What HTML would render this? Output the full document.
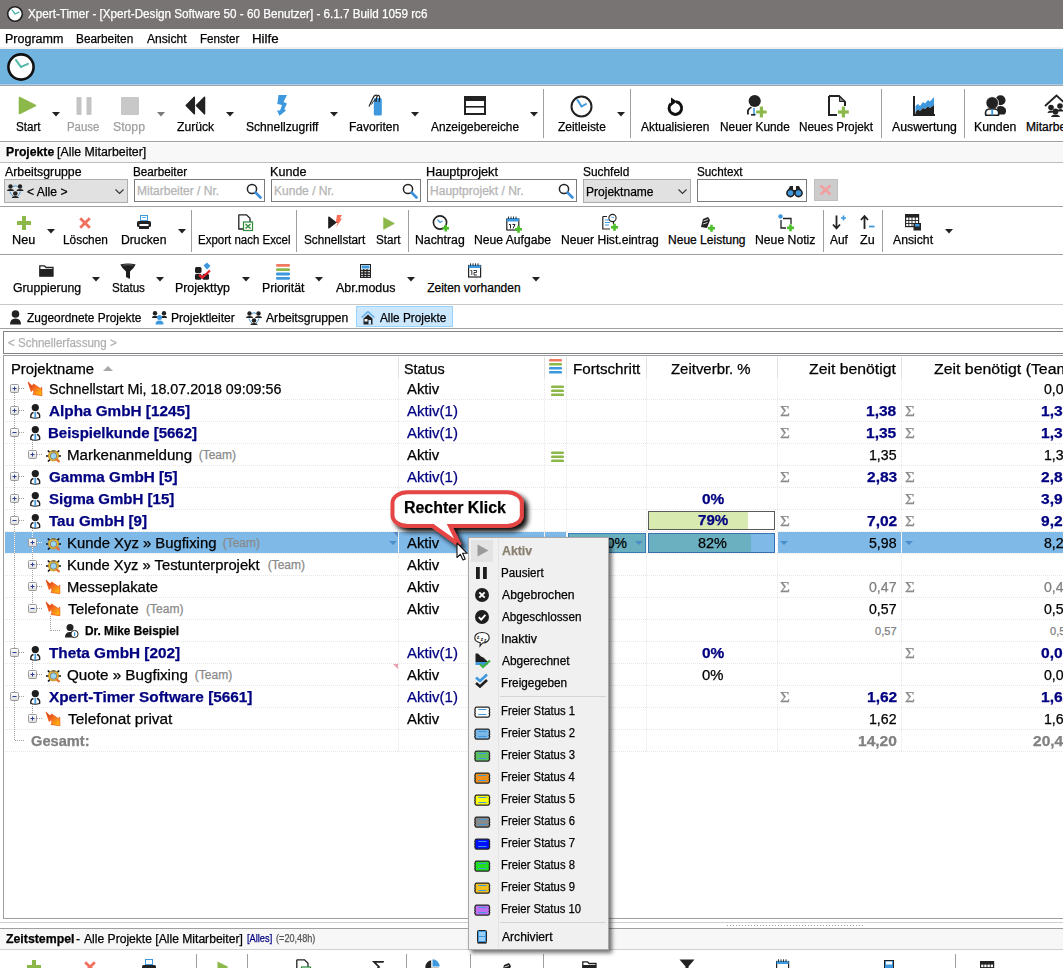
<!DOCTYPE html>
<html><head><meta charset="utf-8"><style>
html,body{margin:0;padding:0;}
body{width:1063px;height:968px;overflow:hidden;position:relative;background:#fff;font-family:"Liberation Sans",sans-serif;}
.t{position:absolute;white-space:pre;line-height:1;-webkit-text-stroke:0.25px currentColor;}
svg{overflow:visible}
</style></head><body>
<div style="position:absolute;left:0px;top:0px;width:1063px;height:29px;background:#797474"></div>
<svg style="position:absolute;left:6px;top:5px" width="18" height="18" viewBox="0 0 18 18"><circle cx="9" cy="9" r="7.3" fill="#fff" stroke="#222" stroke-width="1.6"/><path d="M6.08 4.984999999999999L9 9L13.015 7.175" fill="none" stroke="#45b5a8" stroke-width="1.2800000000000002" stroke-linecap="round"/></svg>
<div class="t" style="left:28.01px;top:7.84px;font-size:12px;color:#fff;transform:scaleX(0.9732);transform-origin:0 0;">Xpert-Timer - [Xpert-Design Software 50 - 60 Benutzer] - 6.1.7 Build 1059 rc6</div>
<div style="position:absolute;left:0px;top:29px;width:1063px;height:18px;background:#fff"></div>
<div style="position:absolute;left:0px;top:47px;width:1063px;height:2px;background:#f0f0f0"></div>
<div class="t" style="left:5.06px;top:32.84px;font-size:12px;color:#000;transform:scaleX(1.0423);transform-origin:0 0;">Programm</div>
<div class="t" style="left:76.31px;top:32.84px;font-size:12px;color:#000;transform:scaleX(0.9858);transform-origin:0 0;">Bearbeiten</div>
<div class="t" style="left:147.30px;top:32.84px;font-size:12px;color:#000;transform:scaleX(1.0076);transform-origin:0 0;">Ansicht</div>
<div class="t" style="left:200.13px;top:32.84px;font-size:12px;color:#000;transform:scaleX(0.9646);transform-origin:0 0;">Fenster</div>
<div class="t" style="left:252.10px;top:32.84px;font-size:12px;color:#000;transform:scaleX(1.1106);transform-origin:0 0;">Hilfe</div>
<div style="position:absolute;left:0px;top:49px;width:1063px;height:36px;background:#71b4e0"></div>
<svg style="position:absolute;left:6px;top:52px" width="30" height="30" viewBox="0 0 30 30"><circle cx="15" cy="15" r="12.6" fill="#fff" stroke="#111" stroke-width="2.6"/><path d="M9.96 8.07L15 15L21.93 11.85" fill="none" stroke="#55b8a8" stroke-width="2.08" stroke-linecap="round"/></svg>
<div style="position:absolute;left:0px;top:84px;width:1063px;height:1px;background:#a6cdee"></div>
<div style="position:absolute;left:0px;top:85px;width:1063px;height:1px;background:#a6a6a6"></div>
<div style="position:absolute;left:0px;top:86px;width:1063px;height:55px;background:#fff"></div>
<div style="position:absolute;left:0px;top:141px;width:1063px;height:1px;background:#a0a0a0"></div>
<div class="t" style="left:15.82px;top:120.84px;font-size:12px;color:#000;transform:scaleX(0.9677);transform-origin:0 0;">Start</div>
<div class="t" style="left:67.15px;top:120.84px;font-size:12px;color:#a0a0a0;transform:scaleX(0.9480);transform-origin:0 0;">Pause</div>
<div class="t" style="left:113.49px;top:120.84px;font-size:12px;color:#a0a0a0;transform:scaleX(1.0197);transform-origin:0 0;">Stopp</div>
<div class="t" style="left:176.70px;top:120.84px;font-size:12px;color:#000;transform:scaleX(1.0137);transform-origin:0 0;">Zurück</div>
<div class="t" style="left:245.50px;top:120.84px;font-size:12px;color:#000;transform:scaleX(1.0084);transform-origin:0 0;">Schnellzugriff</div>
<div class="t" style="left:349.10px;top:120.84px;font-size:12px;color:#000;transform:scaleX(1.0041);transform-origin:0 0;">Favoriten</div>
<div class="t" style="left:431.00px;top:120.84px;font-size:12px;color:#000;transform:scaleX(0.9843);transform-origin:0 0;">Anzeigebereiche</div>
<div class="t" style="left:557.70px;top:120.84px;font-size:12px;color:#000;transform:scaleX(0.9958);transform-origin:0 0;">Zeitleiste</div>
<div class="t" style="left:641.00px;top:120.84px;font-size:12px;color:#000;transform:scaleX(0.9956);transform-origin:0 0;">Aktualisieren</div>
<div class="t" style="left:719.71px;top:120.84px;font-size:12px;color:#000;transform:scaleX(0.9870);transform-origin:0 0;">Neuer Kunde</div>
<div class="t" style="left:799.12px;top:120.84px;font-size:12px;color:#000;transform:scaleX(0.9812);transform-origin:0 0;">Neues Projekt</div>
<div class="t" style="left:892.00px;top:120.84px;font-size:12px;color:#000;transform:scaleX(1.0224);transform-origin:0 0;">Auswertung</div>
<div class="t" style="left:974.08px;top:120.84px;font-size:12px;color:#000;transform:scaleX(1.0227);transform-origin:0 0;">Kunden</div>
<div class="t" style="left:1026.10px;top:120.84px;font-size:12px;color:#000;">Mitarbeiter</div>
<svg style="position:absolute;left:52px;top:112px" width="8" height="5" viewBox="0 0 8 5"><path d="M0 0H8L4 4.5Z" fill="#222"/></svg>
<svg style="position:absolute;left:226px;top:112px" width="8" height="5" viewBox="0 0 8 5"><path d="M0 0H8L4 4.5Z" fill="#222"/></svg>
<svg style="position:absolute;left:330px;top:112px" width="8" height="5" viewBox="0 0 8 5"><path d="M0 0H8L4 4.5Z" fill="#222"/></svg>
<svg style="position:absolute;left:411px;top:112px" width="8" height="5" viewBox="0 0 8 5"><path d="M0 0H8L4 4.5Z" fill="#222"/></svg>
<svg style="position:absolute;left:530px;top:112px" width="8" height="5" viewBox="0 0 8 5"><path d="M0 0H8L4 4.5Z" fill="#222"/></svg>
<svg style="position:absolute;left:617px;top:112px" width="8" height="5" viewBox="0 0 8 5"><path d="M0 0H8L4 4.5Z" fill="#222"/></svg>
<svg style="position:absolute;left:157px;top:112px" width="8" height="5" viewBox="0 0 8 5"><path d="M0 0H8L4 4.5Z" fill="#7a7a7a"/></svg>
<div style="position:absolute;left:543px;top:89px;width:1px;height:49px;background:#a0a0a0"></div>
<div style="position:absolute;left:630px;top:89px;width:1px;height:49px;background:#a0a0a0"></div>
<div style="position:absolute;left:881px;top:89px;width:1px;height:49px;background:#a0a0a0"></div>
<div style="position:absolute;left:964px;top:89px;width:1px;height:49px;background:#a0a0a0"></div>
<svg style="position:absolute;left:18px;top:96px" width="19" height="19" viewBox="0 0 19 19"><path d="M1.5 1.5L17.5 9.5L1.5 17.5Z" fill="#8cb84a" stroke="#8cb84a" stroke-width="1.6" stroke-linejoin="round"/></svg>
<svg style="position:absolute;left:76px;top:97px" width="16" height="18" viewBox="0 0 16 18"><rect x="0.5" y="0" width="5" height="18" rx="1" fill="#c4c4c4"/><rect x="10.5" y="0" width="5" height="18" rx="1" fill="#c4c4c4"/></svg>
<svg style="position:absolute;left:121px;top:97px" width="18" height="18" viewBox="0 0 18 18"><rect x="0" y="0" width="18" height="18" rx="1" fill="#c8c8c8"/></svg>
<svg style="position:absolute;left:185px;top:96px" width="21" height="19" viewBox="0 0 21 19"><path d="M9.3 1.2L1.2 9.5L9.3 17.8Z" fill="#222" stroke="#222" stroke-width="1.5" stroke-linejoin="round"/><path d="M19.5 1.2L11.4 9.5L19.5 17.8Z" fill="#222" stroke="#222" stroke-width="1.5" stroke-linejoin="round"/></svg>
<svg style="position:absolute;left:270px;top:90px" width="20" height="30" viewBox="0 0 20 30"><path d="M8.5 5H17L13.5 12L17 13.5L14.3 19.3L16 20.5L9.5 25.8L7 20.5L10 20.5L12 15L7.3 14Z" fill="#3d98de"/></svg>
<svg style="position:absolute;left:360px;top:90px" width="24" height="30" viewBox="0 0 24 30"><rect x="13.8" y="8" width="8" height="17.4" rx="1.5" fill="#3d98de"/><path d="M16 12Q16.5 5 18.5 5.3Q20.5 5.8 19 12" fill="none" stroke="#222" stroke-width="1.2"/><path d="M17.5 5.5Q15 4 13 8Q11 12 9 16.5" fill="none" stroke="#222" stroke-width="1.2"/><path d="M16.2 10Q14 9 11.5 14.5" fill="none" stroke="#222" stroke-width="1"/></svg>
<svg style="position:absolute;left:464px;top:96px" width="22" height="19" viewBox="0 0 22 19"><rect x="1" y="1" width="20" height="17" fill="none" stroke="#222" stroke-width="2"/><rect x="1" y="1" width="20" height="4" fill="#222"/><rect x="1" y="10" width="20" height="1.6" fill="#222"/></svg>
<svg style="position:absolute;left:570px;top:95px" width="24" height="23" viewBox="0 0 24 23"><circle cx="11.5" cy="11.5" r="10" fill="#fff" stroke="#222" stroke-width="2"/><path d="M7.5 5L11.5 11.5L16 9" fill="none" stroke="#3d98de" stroke-width="2" stroke-linecap="round"/></svg>
<svg style="position:absolute;left:666px;top:97px" width="18" height="19" viewBox="0 0 18 19"><path d="M5 6.5A6.3 6.3 0 1 0 10 4.8" fill="none" stroke="#111" stroke-width="3"/><path d="M5 0.5L11 4.5L5 9Z" fill="#111"/></svg>
<svg style="position:absolute;left:745px;top:93px" width="24" height="25" viewBox="0 0 24 25"><circle cx="9.7" cy="8" r="6.1" fill="#222"/><path d="M3.2 21.5Q1.5 16.5 6.5 14.3" fill="none" stroke="#222" stroke-width="1.8"/><path d="M9 15V21.5H11" fill="none" stroke="#3d98de" stroke-width="1.6"/><path d="M6 21.8H10" stroke="#222" stroke-width="1.6"/><rect x="11" y="17.4" width="10.8" height="3.2" fill="#8cb84a" stroke="#fff" stroke-width="0.6"/><rect x="14.8" y="13.6" width="3.2" height="10.8" fill="#8cb84a"/><rect x="11.3" y="17.7" width="10.2" height="2.6" fill="#8cb84a"/></svg>
<svg style="position:absolute;left:826px;top:93px" width="24" height="25" viewBox="0 0 24 25"><path d="M3 3H13L19 9V13M11 22H3V3" fill="none" stroke="#222" stroke-width="2"/><path d="M13.5 4V8.5H18" fill="#888" stroke="#222" stroke-width="1"/><rect x="12" y="17.4" width="10.8" height="3.2" fill="#8cb84a"/><rect x="15.8" y="13.6" width="3.2" height="10.8" fill="#8cb84a"/></svg>
<svg style="position:absolute;left:913px;top:96px" width="23" height="20" viewBox="0 0 23 20"><path d="M1 0V19H22" fill="none" stroke="#222" stroke-width="2"/><path d="M2.5 10L5 8L7 10L10 6L12 7.5L15 4L17 5.5L21 1V9L17 12L15 10.5L12 13L10 12L7 15L5 13.5L2.5 16Z" fill="#3d98de"/><path d="M2.5 16L5 13.5L7 15L10 12L12 13L15 10.5L17 12L21 9V18H2.5Z" fill="#222"/></svg>
<svg style="position:absolute;left:983px;top:93px" width="26" height="24" viewBox="0 0 26 24"><circle cx="17.5" cy="7.2" r="5" fill="#222"/><path d="M14 13.5Q20 12 22.5 15.5Q24 19 21.5 21.5H15Z" fill="#222"/><circle cx="9.2" cy="10" r="6.3" fill="#222" stroke="#fff" stroke-width="0.8"/><path d="M2.8 22.2Q1.5 16.5 6.2 16H12.2Q16.5 16.5 15.5 22.2Z" fill="#fff" stroke="#222" stroke-width="1.6"/><rect x="8.3" y="16.2" width="1.8" height="6" fill="#3d98de"/></svg>
<svg style="position:absolute;left:1043px;top:93px" width="24" height="25" viewBox="0 0 24 25"><path d="M2 13L13.5 2.5L25 13" fill="none" stroke="#222" stroke-width="1.9"/><circle cx="8" cy="14.5" r="2.8" fill="#222"/><circle cx="17" cy="13" r="2.8" fill="#222"/><circle cx="12.5" cy="18.5" r="2.9" fill="#222"/><path d="M4.5 20Q5 17.5 8 17.5Q10.5 17.5 11 19.5Z" fill="#222"/><path d="M8 24Q8.5 21.5 12.5 21.5Q16.5 21.5 17 24Z" fill="#222"/><path d="M14 18.5Q14.5 16 17 16Q20 16 20.5 18.5Z" fill="#222"/></svg>
<div style="position:absolute;left:0px;top:142px;width:1063px;height:20px;background:#f8f8f8"></div>
<div style="position:absolute;left:0px;top:142px;width:1063px;height:1px;background:#fdfdfd"></div>
<div style="position:absolute;left:0px;top:162px;width:1063px;height:1px;background:#bdbdbd"></div>
<div class="t" style="left:5.79px;top:146.14px;font-size:12px;font-weight:bold;color:#000;transform:scaleX(1.0173);transform-origin:0 0;">Projekte</div>
<div class="t" style="left:56.88px;top:146.14px;font-size:12px;color:#000;transform:scaleX(1.0294);transform-origin:0 0;">[Alle Mitarbeiter]</div>
<div class="t" style="left:4.50px;top:165.84px;font-size:12px;color:#000;transform:scaleX(1.0243);transform-origin:0 0;">Arbeitsgruppe</div>
<div class="t" style="left:133.12px;top:165.84px;font-size:12px;color:#000;transform:scaleX(0.9761);transform-origin:0 0;">Bearbeiter</div>
<div class="t" style="left:270.05px;top:165.84px;font-size:12px;color:#000;transform:scaleX(1.0511);transform-origin:0 0;">Kunde</div>
<div class="t" style="left:426.05px;top:165.84px;font-size:12px;color:#000;transform:scaleX(1.0581);transform-origin:0 0;">Hauptprojekt</div>
<div class="t" style="left:582.70px;top:165.84px;font-size:12px;color:#000;transform:scaleX(0.9912);transform-origin:0 0;">Suchfeld</div>
<div class="t" style="left:696.51px;top:165.84px;font-size:12px;color:#000;transform:scaleX(0.9740);transform-origin:0 0;">Suchtext</div>
<div style="position:absolute;left:4px;top:179px;width:124px;height:24px;background:#e1e1e1;border:1px solid #adadad;box-sizing:border-box"></div>
<svg style="position:absolute;left:7px;top:184px" width="17" height="15" viewBox="0 0 17 15"><circle cx="3.5" cy="2.5" r="2.2" fill="#222"/><path d="M0 7Q0 5 3.5 5Q7 5 7 7Z" fill="#222"/><circle cx="13" cy="2.5" r="2.2" fill="#222"/><path d="M9.5 7Q9.5 5 13 5Q16.5 5 16.5 7Z" fill="#222"/><circle cx="8.3" cy="9.5" r="2.3" fill="#222"/><path d="M4.8 14Q4.8 12 8.3 12Q11.8 12 11.8 14Z" fill="#222"/><path d="M3 7.5Q4 11 6 12M13.5 7.5Q12.5 11 10.5 12M6 2.5Q8.3 1 10.5 2.5" fill="none" stroke="#3d98de" stroke-width="1"/></svg>
<div class="t" style="left:27.19px;top:186.04px;font-size:12px;color:#000;transform:scaleX(1.0128);transform-origin:0 0;">&lt; Alle &gt;</div>
<svg style="position:absolute;left:115px;top:189px" width="9" height="6" viewBox="0 0 9 6"><path d="M0.5 0.5L4.5 4.5L8.5 0.5" fill="none" stroke="#333" stroke-width="1.1"/></svg>
<div style="position:absolute;left:134px;top:179px;width:131px;height:23px;background:#fff;border:1px solid #7a7a7a;box-sizing:border-box"></div>
<div class="t" style="left:137.10px;top:185.14px;font-size:12px;color:#b4b4b4;">Mitarbeiter / Nr.</div>
<svg style="position:absolute;left:246px;top:183px" width="16" height="16" viewBox="0 0 16 16"><circle cx="6" cy="6" r="4.6" fill="none" stroke="#222" stroke-width="1.5"/><path d="M9.5 9.5L14.5 14.5" stroke="#3d8ed8" stroke-width="2.6" stroke-linecap="round"/></svg>
<div style="position:absolute;left:271px;top:179px;width:150px;height:23px;background:#fff;border:1px solid #7a7a7a;box-sizing:border-box"></div>
<div class="t" style="left:274.10px;top:185.14px;font-size:12px;color:#b4b4b4;">Kunde / Nr.</div>
<svg style="position:absolute;left:402px;top:183px" width="16" height="16" viewBox="0 0 16 16"><circle cx="6" cy="6" r="4.6" fill="none" stroke="#222" stroke-width="1.5"/><path d="M9.5 9.5L14.5 14.5" stroke="#3d8ed8" stroke-width="2.6" stroke-linecap="round"/></svg>
<div style="position:absolute;left:427px;top:179px;width:150px;height:23px;background:#fff;border:1px solid #7a7a7a;box-sizing:border-box"></div>
<div class="t" style="left:430.10px;top:185.14px;font-size:12px;color:#b4b4b4;">Hauptprojekt / Nr.</div>
<svg style="position:absolute;left:558px;top:183px" width="16" height="16" viewBox="0 0 16 16"><circle cx="6" cy="6" r="4.6" fill="none" stroke="#222" stroke-width="1.5"/><path d="M9.5 9.5L14.5 14.5" stroke="#3d8ed8" stroke-width="2.6" stroke-linecap="round"/></svg>
<div style="position:absolute;left:583px;top:179px;width:108px;height:24px;background:#e1e1e1;border:1px solid #adadad;box-sizing:border-box"></div>
<div class="t" style="left:585.60px;top:186.04px;font-size:12px;color:#000;transform:scaleX(1.0030);transform-origin:0 0;">Projektname</div>
<svg style="position:absolute;left:678px;top:189px" width="9" height="6" viewBox="0 0 9 6"><path d="M0.5 0.5L4.5 4.5L8.5 0.5" fill="none" stroke="#333" stroke-width="1.1"/></svg>
<div style="position:absolute;left:697px;top:179px;width:110px;height:23px;background:#fff;border:1px solid #7a7a7a;box-sizing:border-box"></div>
<svg style="position:absolute;left:786px;top:185px" width="17" height="12" viewBox="0 0 17 12"><path d="M1 7L4 1H7V5H10V1H13L16 7" fill="#222"/><circle cx="4.5" cy="8" r="3.6" fill="#3d98de" stroke="#222" stroke-width="1.6"/><circle cx="12.5" cy="8" r="3.6" fill="#3d98de" stroke="#222" stroke-width="1.6"/></svg>
<div style="position:absolute;left:814px;top:179px;width:24px;height:22px;background:#cccccc;border:1px solid #bfbfbf;box-sizing:border-box"></div>
<svg style="position:absolute;left:819px;top:184px" width="13" height="12" viewBox="0 0 13 12"><path d="M1.5 1.5L11.5 10.5M11.5 1.5L1.5 10.5" stroke="#f0a0a0" stroke-width="2.6"/></svg>
<div style="position:absolute;left:0px;top:206px;width:1063px;height:1px;background:#a0a0a0"></div>
<div class="t" style="left:12.35px;top:234.14px;font-size:12px;color:#000;transform:scaleX(1.0542);transform-origin:0 0;">Neu</div>
<div class="t" style="left:62.61px;top:234.14px;font-size:12px;color:#000;transform:scaleX(0.9886);transform-origin:0 0;">Löschen</div>
<div class="t" style="left:121.09px;top:234.14px;font-size:12px;color:#000;transform:scaleX(1.0163);transform-origin:0 0;">Drucken</div>
<div class="t" style="left:197.54px;top:234.14px;font-size:12px;color:#000;transform:scaleX(0.9569);transform-origin:0 0;">Export nach Excel</div>
<div class="t" style="left:303.51px;top:234.14px;font-size:12px;color:#000;transform:scaleX(0.9775);transform-origin:0 0;">Schnellstart</div>
<div class="t" style="left:375.52px;top:234.14px;font-size:12px;color:#000;transform:scaleX(0.9677);transform-origin:0 0;">Start</div>
<div class="t" style="left:414.68px;top:234.14px;font-size:12px;color:#000;transform:scaleX(1.0213);transform-origin:0 0;">Nachtrag</div>
<div class="t" style="left:474.49px;top:234.14px;font-size:12px;color:#000;transform:scaleX(1.0120);transform-origin:0 0;">Neue Aufgabe</div>
<div class="t" style="left:561.09px;top:234.14px;font-size:12px;color:#000;transform:scaleX(1.0105);transform-origin:0 0;">Neuer Hist.eintrag</div>
<div class="t" style="left:668.10px;top:234.14px;font-size:12px;color:#000;">Neue Leistung</div>
<div class="t" style="left:755.08px;top:234.14px;font-size:12px;color:#000;transform:scaleX(1.0172);transform-origin:0 0;">Neue Notiz</div>
<div class="t" style="left:830.00px;top:234.14px;font-size:12px;color:#000;transform:scaleX(0.9945);transform-origin:0 0;">Auf</div>
<div class="t" style="left:859.69px;top:234.14px;font-size:12px;color:#000;transform:scaleX(1.0465);transform-origin:0 0;">Zu</div>
<div class="t" style="left:893.00px;top:234.14px;font-size:12px;color:#000;transform:scaleX(1.0178);transform-origin:0 0;">Ansicht</div>
<svg style="position:absolute;left:46.6px;top:228.5px" width="8" height="5" viewBox="0 0 8 5"><path d="M0 0H8L4 4.5Z" fill="#222"/></svg>
<svg style="position:absolute;left:178px;top:228.5px" width="8" height="5" viewBox="0 0 8 5"><path d="M0 0H8L4 4.5Z" fill="#222"/></svg>
<svg style="position:absolute;left:945px;top:228.5px" width="8" height="5" viewBox="0 0 8 5"><path d="M0 0H8L4 4.5Z" fill="#222"/></svg>
<div style="position:absolute;left:190.5px;top:210px;width:1px;height:42px;background:#a0a0a0"></div>
<div style="position:absolute;left:296.2px;top:210px;width:1px;height:42px;background:#a0a0a0"></div>
<div style="position:absolute;left:407.7px;top:210px;width:1px;height:42px;background:#a0a0a0"></div>
<div style="position:absolute;left:822.7px;top:210px;width:1px;height:42px;background:#a0a0a0"></div>
<div style="position:absolute;left:881.8px;top:210px;width:1px;height:42px;background:#a0a0a0"></div>
<svg style="position:absolute;left:17px;top:216px" width="14" height="14" viewBox="0 0 14 14"><rect x="0" y="5" width="14" height="4" fill="#8cb84a"/><rect x="5" y="0" width="4" height="14" fill="#8cb84a"/></svg>
<svg style="position:absolute;left:79px;top:217px" width="12" height="12" viewBox="0 0 12 12"><path d="M1.2 1.2L10.8 10.8M10.8 1.2L1.2 10.8" stroke="#f07060" stroke-width="2.8"/></svg>
<svg style="position:absolute;left:137px;top:215px" width="14" height="15" viewBox="0 0 14 15"><rect x="3.5" y="0.5" width="7" height="5" fill="#fff" stroke="#3d98de" stroke-width="1"/><path d="M5 2.5H9" stroke="#3d98de" stroke-width="0.8"/><rect x="0" y="6" width="14" height="6" rx="1.5" fill="#222"/><rect x="2.5" y="9" width="9" height="2" fill="#fff"/><rect x="2" y="12" width="10" height="2" fill="#222"/></svg>
<svg style="position:absolute;left:238px;top:214px" width="15" height="17" viewBox="0 0 15 17"><path d="M0.8 0.8H8.5L12 4.2V10" fill="none" stroke="#222" stroke-width="1.3"/><path d="M0.8 0.8V15H5" fill="none" stroke="#222" stroke-width="1.3"/><rect x="5.5" y="8" width="9" height="8.5" fill="#fff" stroke="#2a8a3a" stroke-width="1.2"/><path d="M7.5 10L12.5 14.5M12.5 10L7.5 14.5" stroke="#2a8a3a" stroke-width="1.3"/></svg>
<svg style="position:absolute;left:327px;top:214px" width="17" height="16" viewBox="0 0 17 16"><path d="M1.8 3L8.8 8.5L1.8 14Z" fill="#1e1e1e" stroke="#1e1e1e" stroke-width="1.2" stroke-linejoin="round"/><path d="M8.5 8.5H10.5" stroke="#1e1e1e" stroke-width="1"/><path d="M10 1H15L12.8 4.5H15L9 13.5L10.8 8.5H8.8Z" fill="#fa6e55"/></svg>
<svg style="position:absolute;left:383px;top:216.5px" width="12" height="13" viewBox="0 0 12 13"><path d="M0.7 0.7L11.3 6.5L0.7 12.3Z" fill="#8cb84a" stroke="#8cb84a" stroke-width="0.8" stroke-linejoin="round"/></svg>
<svg style="position:absolute;left:433px;top:215px" width="17" height="17" viewBox="0 0 17 17"><circle cx="7" cy="7.5" r="6.6" fill="#fff" stroke="#222" stroke-width="1.6"/><path d="M4.5 4.5L7 7.5L9.5 6" fill="none" stroke="#3d98de" stroke-width="1.3"/><rect x="9.5" y="12" width="6.5" height="2.6" fill="#4cbf2a"/><rect x="11.5" y="10" width="2.6" height="6.5" fill="#4cbf2a"/></svg>
<svg style="position:absolute;left:506px;top:215.5px" width="16" height="17" viewBox="0 0 16 17"><rect x="0.8" y="3" width="12" height="11" fill="#fff" stroke="#222" stroke-width="1.2"/><rect x="0.8" y="2" width="12" height="3.5" fill="#3d98de"/><path d="M2.5 0.5V3M5 0.5V3M7.5 0.5V3M10 0.5V3" stroke="#222" stroke-width="0.9"/><path d="M3 8.5H4.5V12.5M6.5 8.5H9L7 12.5" fill="none" stroke="#222" stroke-width="1"/><rect x="9" y="12" width="7" height="2.6" fill="#4cbf2a"/><rect x="11.2" y="9.8" width="2.6" height="7" fill="#4cbf2a"/></svg>
<svg style="position:absolute;left:602px;top:214px" width="16" height="17" viewBox="0 0 16 17"><path d="M0.8 2.5H5M10 2.5H11.5V10M0.8 2.5V15H8" fill="none" stroke="#222" stroke-width="1.2"/><path d="M3 6H8M3 8.5H8M3 11H7" stroke="#3d98de" stroke-width="1"/><circle cx="10.5" cy="4" r="3.6" fill="#fff" stroke="#222" stroke-width="1.1"/><path d="M9.3 2.5L10.5 4L12 3.3" stroke="#3d98de" stroke-width="0.9" fill="none"/><rect x="9" y="12" width="7" height="2.6" fill="#4cbf2a"/><rect x="11.2" y="9.8" width="2.6" height="7" fill="#4cbf2a"/></svg>
<svg style="position:absolute;left:700px;top:216px" width="15" height="15" viewBox="0 0 15 15"><path d="M1 11L3 3L8 1L10 4L7 12Z" fill="#222"/><path d="M3.5 5L8 3.5M3 8L7.5 6.5" stroke="#fff" stroke-width="0.8"/><rect x="8" y="11" width="7" height="2.6" fill="#4cbf2a"/><rect x="10.2" y="8.8" width="2.6" height="7" fill="#4cbf2a"/></svg>
<svg style="position:absolute;left:778px;top:214px" width="16" height="17" viewBox="0 0 16 17"><circle cx="2.5" cy="2.5" r="2.2" fill="#3d98de"/><path d="M5 4.5H13V10M3 6V14H8" fill="none" stroke="#222" stroke-width="1.3"/><rect x="9" y="12.5" width="7" height="2.6" fill="#4cbf2a"/><rect x="11.2" y="10.3" width="2.6" height="7" fill="#4cbf2a"/></svg>
<svg style="position:absolute;left:832px;top:215px" width="15" height="15" viewBox="0 0 15 15"><path d="M4.5 0.5V13M1 9.5L4.5 13.5L8 9.5" fill="none" stroke="#222" stroke-width="1.8"/><path d="M9 3H14M11.5 0.5V5.5" stroke="#3d98de" stroke-width="1.6"/></svg>
<svg style="position:absolute;left:860px;top:215px" width="15" height="15" viewBox="0 0 15 15"><path d="M4.5 14V1.5M1 5L4.5 1L8 5" fill="none" stroke="#222" stroke-width="1.8"/><path d="M9 11.5H14.5" stroke="#3d98de" stroke-width="1.8"/></svg>
<svg style="position:absolute;left:905px;top:214px" width="16" height="17" viewBox="0 0 16 17"><rect x="0.6" y="0.6" width="13" height="12" fill="#fff" stroke="#222" stroke-width="1.2"/><rect x="0.6" y="0.6" width="13" height="3" fill="#222"/><path d="M0.6 6.5H13.6M0.6 9.5H13.6M3.8 3V12.6M7 3V12.6M10.3 3V12.6" stroke="#222" stroke-width="0.9"/><rect x="8.5" y="9" width="7.5" height="7.5" fill="#222"/><rect x="10" y="10" width="4.5" height="2.5" fill="#3d98de"/></svg>
<div style="position:absolute;left:0px;top:254px;width:1063px;height:1px;background:#a0a0a0"></div>
<div class="t" style="left:12.69px;top:282.14px;font-size:12px;color:#000;transform:scaleX(1.0214);transform-origin:0 0;">Gruppierung</div>
<div class="t" style="left:111.52px;top:282.14px;font-size:12px;color:#000;transform:scaleX(0.9668);transform-origin:0 0;">Status</div>
<div class="t" style="left:175.47px;top:282.14px;font-size:12px;color:#000;transform:scaleX(1.0308);transform-origin:0 0;">Projekttyp</div>
<div class="t" style="left:261.58px;top:282.14px;font-size:12px;color:#000;transform:scaleX(1.0272);transform-origin:0 0;">Priorität</div>
<div class="t" style="left:336.00px;top:282.14px;font-size:12px;color:#000;transform:scaleX(1.0351);transform-origin:0 0;">Abr.modus</div>
<div class="t" style="left:427.20px;top:282.14px;font-size:12px;color:#000;">Zeiten vorhanden</div>
<svg style="position:absolute;left:91.7px;top:277px" width="8" height="5" viewBox="0 0 8 5"><path d="M0 0H8L4 4.5Z" fill="#222"/></svg>
<svg style="position:absolute;left:155.8px;top:277px" width="8" height="5" viewBox="0 0 8 5"><path d="M0 0H8L4 4.5Z" fill="#222"/></svg>
<svg style="position:absolute;left:242px;top:277px" width="8" height="5" viewBox="0 0 8 5"><path d="M0 0H8L4 4.5Z" fill="#222"/></svg>
<svg style="position:absolute;left:315px;top:277px" width="8" height="5" viewBox="0 0 8 5"><path d="M0 0H8L4 4.5Z" fill="#222"/></svg>
<svg style="position:absolute;left:406.6px;top:277px" width="8" height="5" viewBox="0 0 8 5"><path d="M0 0H8L4 4.5Z" fill="#222"/></svg>
<svg style="position:absolute;left:532px;top:277px" width="8" height="5" viewBox="0 0 8 5"><path d="M0 0H8L4 4.5Z" fill="#222"/></svg>
<svg style="position:absolute;left:39px;top:265px" width="15" height="12" viewBox="0 0 15 12"><path d="M0.8 0.8H5.5L7 2.5H14V11.2H0.8Z" fill="#fff" stroke="#222" stroke-width="1.3"/><rect x="0.8" y="4" width="13.2" height="7.2" fill="#222"/></svg>
<svg style="position:absolute;left:120px;top:263px" width="16" height="17" viewBox="0 0 16 17"><path d="M0.3 1.5Q8 -0.5 15.7 1.5Q14 5 10 8.5V16L6 14V8.5Q2 5 0.3 1.5Z" fill="#1e1e1e"/><path d="M3 2.2Q8 1.2 13 2.2" stroke="#777" stroke-width="0.8" fill="none"/></svg>
<svg style="position:absolute;left:195px;top:262px" width="16" height="18" viewBox="0 0 16 18"><rect x="0" y="5" width="6.5" height="6" rx="1.5" fill="#1e1e1e"/><rect x="0" y="11.8" width="6.5" height="6" rx="1.5" fill="#1e1e1e"/><rect x="7.5" y="11.8" width="6.5" height="6" rx="1.5" fill="#1e1e1e"/><path d="M8.5 3.5L12 0.5L15.5 4L12 7.5Z" fill="#3d98de"/><path d="M4 13L7.5 15.5L15 8.5" fill="none" stroke="#e8202a" stroke-width="2.2"/></svg>
<svg style="position:absolute;left:276px;top:264px" width="14" height="16" viewBox="0 0 14 16"><rect x="0" y="0" width="14" height="2.8" rx="1.2" fill="#f07a60"/><rect x="0" y="4.3" width="14" height="2.8" rx="1.2" fill="#8cb84a"/><rect x="0" y="8.6" width="14" height="2.8" rx="1.2" fill="#3d98de"/><rect x="0" y="12.9" width="14" height="2.8" rx="1.2" fill="#3d98de"/></svg>
<svg style="position:absolute;left:360px;top:264px" width="11" height="14" viewBox="0 0 11 14"><rect x="0.5" y="0.5" width="10" height="13" fill="#fff" stroke="#222" stroke-width="1"/><rect x="1.5" y="1.5" width="8" height="3" fill="#3d98de"/><path d="M1 6.5H10M1 9H10M1 11.5H10M3.8 5V13.5M7 5V13.5" stroke="#222" stroke-width="1.3"/></svg>
<svg style="position:absolute;left:468px;top:263px" width="13" height="15" viewBox="0 0 13 15"><rect x="0.6" y="2.5" width="12" height="11.5" fill="#fff" stroke="#222" stroke-width="1.2"/><rect x="0.6" y="2" width="12" height="3" fill="#3d98de"/><path d="M2.5 0.3V3M5 0.3V3M7.5 0.3V3M10 0.3V3" stroke="#222" stroke-width="0.9"/><path d="M2.5 7.5H3.8V12M5.5 7.5H8.5V9.5H6V12H9" fill="none" stroke="#222" stroke-width="0.9"/></svg>
<div style="position:absolute;left:0px;top:304px;width:1063px;height:1px;background:#c8c8c8"></div>
<div style="position:absolute;left:356px;top:306px;width:97px;height:21px;background:#cce8ff;border:1px solid #99d1ff;box-sizing:border-box"></div>
<div class="t" style="left:27.10px;top:311.64px;font-size:12px;color:#000;transform:scaleX(0.9913);transform-origin:0 0;">Zugeordnete Projekte</div>
<div class="t" style="left:171.09px;top:311.64px;font-size:12px;color:#000;transform:scaleX(1.0080);transform-origin:0 0;">Projektleiter</div>
<div class="t" style="left:266.00px;top:311.64px;font-size:12px;color:#000;transform:scaleX(1.0112);transform-origin:0 0;">Arbeitsgruppen</div>
<div class="t" style="left:380.00px;top:311.64px;font-size:12px;color:#000;transform:scaleX(0.9836);transform-origin:0 0;">Alle Projekte</div>
<svg style="position:absolute;left:10px;top:310px" width="11" height="15" viewBox="0 0 11 15"><circle cx="5.5" cy="4" r="3.8" fill="#222"/><path d="M0 14.5Q0 8.5 5.5 8.5Q11 8.5 11 14.5Z" fill="#222"/></svg>
<svg style="position:absolute;left:152px;top:311px" width="15" height="14" viewBox="0 0 15 14"><circle cx="3" cy="2.3" r="2.2" fill="#222"/><path d="M0 7Q0 4.8 3 4.8Q6 4.8 6 7Z" fill="#222"/><circle cx="12" cy="2.3" r="2.2" fill="#222"/><path d="M9 7Q9 4.8 12 4.8Q15 4.8 15 7Z" fill="#222"/><circle cx="7.5" cy="6.5" r="2.5" fill="#3d98de"/><path d="M3.5 13.5Q3.5 9.5 7.5 9.5Q11.5 9.5 11.5 13.5Z" fill="#3d98de"/></svg>
<svg style="position:absolute;left:246px;top:311px" width="16" height="15" viewBox="0 0 16 15"><circle cx="3.5" cy="2.5" r="2.2" fill="#222"/><path d="M0 7Q0 5 3.5 5Q7 5 7 7Z" fill="#222"/><circle cx="12.5" cy="2.5" r="2.2" fill="#222"/><path d="M9 7Q9 5 12.5 5Q16 5 16 7Z" fill="#222"/><circle cx="8" cy="9.5" r="2.3" fill="#222"/><path d="M4.5 14Q4.5 12 8 12Q11.5 12 11.5 14Z" fill="#222"/><path d="M3 7.5Q4 11 6 12M13 7.5Q12 11 10 12M6 2.5Q8 1 10 2.5" fill="none" stroke="#3d98de" stroke-width="1"/></svg>
<svg style="position:absolute;left:361px;top:311px" width="14" height="14" viewBox="0 0 14 14"><path d="M0.5 6.5L7 0.8L13.5 6.5" fill="none" stroke="#5aaae8" stroke-width="1.4"/><path d="M2.5 7.5L7 3.5L11.5 7.5V13.5H2.5Z" fill="#222"/><rect x="3.5" y="8" width="3" height="2.5" fill="#fff"/><rect x="7.5" y="9" width="2.5" height="4.5" fill="#cce8ff"/></svg>
<div style="position:absolute;left:0px;top:328px;width:1063px;height:1px;background:#a0a0a0"></div>
<div style="position:absolute;left:3px;top:331px;width:1060px;height:23px;background:#fff;border:1px solid #828282;border-right:none;box-sizing:border-box"></div>
<div class="t" style="left:7.52px;top:337.14px;font-size:12px;color:#b0b0b0;transform:scaleX(0.9642);transform-origin:0 0;">&lt; Schnellerfassung &gt;</div>
<svg width="0" height="0" style="position:absolute"><defs><linearGradient id="eg" x1="0" y1="0" x2="0" y2="1"><stop offset="0" stop-color="#fff"/><stop offset="1" stop-color="#dcdcdc"/></linearGradient><linearGradient id="flg" x1="0" y1="0" x2="1" y2="1"><stop offset="0" stop-color="#c42010"/><stop offset="0.45" stop-color="#f56a20"/><stop offset="1" stop-color="#ffc808"/></linearGradient></defs></svg>
<div style="position:absolute;left:3px;top:355px;width:1063px;height:564px;border:1px solid #a0a0a0;border-top:1px solid #9a9aa2;border-right:none;box-sizing:border-box;background:#fff"></div>
<div style="position:absolute;left:398px;top:357px;width:1px;height:21px;background:#e2e2e2"></div>
<div style="position:absolute;left:544px;top:357px;width:1px;height:21px;background:#e2e2e2"></div>
<div style="position:absolute;left:566px;top:357px;width:1px;height:21px;background:#e2e2e2"></div>
<div style="position:absolute;left:646px;top:357px;width:1px;height:21px;background:#e2e2e2"></div>
<div style="position:absolute;left:777px;top:357px;width:1px;height:21px;background:#e2e2e2"></div>
<div style="position:absolute;left:901px;top:357px;width:1px;height:21px;background:#e2e2e2"></div>
<div class="t" style="left:10.64px;top:361.75px;font-size:14px;color:#000;transform:scaleX(1.0572);transform-origin:0 0;">Projektname</div>
<svg style="position:absolute;left:103px;top:366px" width="10" height="5" viewBox="0 0 10 5"><path d="M0 5L5 0L10 5Z" fill="#a8a8a8"/></svg>
<div class="t" style="left:404.38px;top:361.75px;font-size:14px;color:#000;transform:scaleX(1.0259);transform-origin:0 0;">Status</div>
<svg style="position:absolute;left:548.5px;top:359px" width="14" height="15" viewBox="0 0 14 15"><rect x="0" y="0" width="13" height="2.6" rx="1.2" fill="#f07a60"/><rect x="0" y="4" width="13" height="2.6" rx="1.2" fill="#8cb84a"/><rect x="0" y="8" width="13" height="2.6" rx="1.2" fill="#3d98de"/><rect x="0" y="12" width="13" height="2.6" rx="1.2" fill="#3d98de"/></svg>
<div class="t" style="left:572.81px;top:361.75px;font-size:14px;color:#000;transform:scaleX(1.0820);transform-origin:0 0;">Fortschritt</div>
<div class="t" style="left:670.57px;top:361.75px;font-size:14px;color:#000;transform:scaleX(1.0664);transform-origin:0 0;">Zeitverbr. %</div>
<div class="t" style="left:808.55px;top:361.75px;font-size:14px;color:#000;transform:scaleX(1.1266);transform-origin:0 0;">Zeit benötigt</div>
<div class="t" style="left:933.55px;top:361.75px;font-size:14px;color:#000;transform:scaleX(1.1323);transform-origin:0 0;">Zeit benötigt (Team)</div>
<div style="position:absolute;left:5px;top:399px;width:1058px;height:1px;background:repeating-linear-gradient(90deg,#e6e6e6 0 1px,transparent 1px 2px)"></div>
<div style="position:absolute;left:5px;top:421px;width:1058px;height:1px;background:repeating-linear-gradient(90deg,#e6e6e6 0 1px,transparent 1px 2px)"></div>
<div style="position:absolute;left:5px;top:443px;width:1058px;height:1px;background:repeating-linear-gradient(90deg,#e6e6e6 0 1px,transparent 1px 2px)"></div>
<div style="position:absolute;left:5px;top:465px;width:1058px;height:1px;background:repeating-linear-gradient(90deg,#e6e6e6 0 1px,transparent 1px 2px)"></div>
<div style="position:absolute;left:5px;top:487px;width:1058px;height:1px;background:repeating-linear-gradient(90deg,#e6e6e6 0 1px,transparent 1px 2px)"></div>
<div style="position:absolute;left:5px;top:509px;width:1058px;height:1px;background:repeating-linear-gradient(90deg,#e6e6e6 0 1px,transparent 1px 2px)"></div>
<div style="position:absolute;left:5px;top:531px;width:1058px;height:1px;background:repeating-linear-gradient(90deg,#e6e6e6 0 1px,transparent 1px 2px)"></div>
<div style="position:absolute;left:5px;top:553px;width:1058px;height:1px;background:repeating-linear-gradient(90deg,#e6e6e6 0 1px,transparent 1px 2px)"></div>
<div style="position:absolute;left:5px;top:575px;width:1058px;height:1px;background:repeating-linear-gradient(90deg,#e6e6e6 0 1px,transparent 1px 2px)"></div>
<div style="position:absolute;left:5px;top:597px;width:1058px;height:1px;background:repeating-linear-gradient(90deg,#e6e6e6 0 1px,transparent 1px 2px)"></div>
<div style="position:absolute;left:5px;top:619px;width:1058px;height:1px;background:repeating-linear-gradient(90deg,#e6e6e6 0 1px,transparent 1px 2px)"></div>
<div style="position:absolute;left:5px;top:641px;width:1058px;height:1px;background:repeating-linear-gradient(90deg,#e6e6e6 0 1px,transparent 1px 2px)"></div>
<div style="position:absolute;left:5px;top:663px;width:1058px;height:1px;background:repeating-linear-gradient(90deg,#e6e6e6 0 1px,transparent 1px 2px)"></div>
<div style="position:absolute;left:5px;top:685px;width:1058px;height:1px;background:repeating-linear-gradient(90deg,#e6e6e6 0 1px,transparent 1px 2px)"></div>
<div style="position:absolute;left:5px;top:707px;width:1058px;height:1px;background:repeating-linear-gradient(90deg,#e6e6e6 0 1px,transparent 1px 2px)"></div>
<div style="position:absolute;left:5px;top:729px;width:1058px;height:1px;background:repeating-linear-gradient(90deg,#e6e6e6 0 1px,transparent 1px 2px)"></div>
<div style="position:absolute;left:5px;top:751px;width:1058px;height:1px;background:repeating-linear-gradient(90deg,#e6e6e6 0 1px,transparent 1px 2px)"></div>
<div style="position:absolute;left:398px;top:378px;width:1px;height:374px;background:repeating-linear-gradient(180deg,#e6e6e6 0 1px,transparent 1px 2px)"></div>
<div style="position:absolute;left:544px;top:378px;width:1px;height:374px;background:repeating-linear-gradient(180deg,#e6e6e6 0 1px,transparent 1px 2px)"></div>
<div style="position:absolute;left:566px;top:378px;width:1px;height:374px;background:repeating-linear-gradient(180deg,#e6e6e6 0 1px,transparent 1px 2px)"></div>
<div style="position:absolute;left:646px;top:378px;width:1px;height:374px;background:repeating-linear-gradient(180deg,#e6e6e6 0 1px,transparent 1px 2px)"></div>
<div style="position:absolute;left:777px;top:378px;width:1px;height:374px;background:repeating-linear-gradient(180deg,#e6e6e6 0 1px,transparent 1px 2px)"></div>
<div style="position:absolute;left:901px;top:378px;width:1px;height:374px;background:repeating-linear-gradient(180deg,#e6e6e6 0 1px,transparent 1px 2px)"></div>
<div style="position:absolute;left:5px;top:532px;width:393px;height:21px;background:#7eb9e8"></div>
<div style="position:absolute;left:399px;top:532px;width:145px;height:21px;background:#7eb9e8"></div>
<div style="position:absolute;left:545px;top:532px;width:21px;height:21px;background:#7eb9e8"></div>
<div style="position:absolute;left:778px;top:532px;width:123px;height:21px;background:#7eb9e8"></div>
<div style="position:absolute;left:902px;top:532px;width:161px;height:21px;background:#7eb9e8"></div>
<div style="position:absolute;left:14px;top:393px;width:1px;height:348px;background:repeating-linear-gradient(180deg,#a0a0a0 0 1px,transparent 1px 2px)"></div>
<div style="position:absolute;left:19px;top:388px;width:6px;height:1px;background:repeating-linear-gradient(90deg,#a0a0a0 0 1px,transparent 1px 2px)"></div>
<div style="position:absolute;left:19px;top:410px;width:6px;height:1px;background:repeating-linear-gradient(90deg,#a0a0a0 0 1px,transparent 1px 2px)"></div>
<div style="position:absolute;left:19px;top:432px;width:6px;height:1px;background:repeating-linear-gradient(90deg,#a0a0a0 0 1px,transparent 1px 2px)"></div>
<div style="position:absolute;left:19px;top:476px;width:6px;height:1px;background:repeating-linear-gradient(90deg,#a0a0a0 0 1px,transparent 1px 2px)"></div>
<div style="position:absolute;left:19px;top:498px;width:6px;height:1px;background:repeating-linear-gradient(90deg,#a0a0a0 0 1px,transparent 1px 2px)"></div>
<div style="position:absolute;left:19px;top:520px;width:6px;height:1px;background:repeating-linear-gradient(90deg,#a0a0a0 0 1px,transparent 1px 2px)"></div>
<div style="position:absolute;left:19px;top:652px;width:6px;height:1px;background:repeating-linear-gradient(90deg,#a0a0a0 0 1px,transparent 1px 2px)"></div>
<div style="position:absolute;left:19px;top:696px;width:6px;height:1px;background:repeating-linear-gradient(90deg,#a0a0a0 0 1px,transparent 1px 2px)"></div>
<div style="position:absolute;left:15px;top:740px;width:10px;height:1px;background:repeating-linear-gradient(90deg,#a0a0a0 0 1px,transparent 1px 2px)"></div>
<div style="position:absolute;left:32px;top:440px;width:1px;height:18px;background:repeating-linear-gradient(180deg,#a0a0a0 0 1px,transparent 1px 2px)"></div>
<div style="position:absolute;left:37px;top:454px;width:6px;height:1px;background:repeating-linear-gradient(90deg,#a0a0a0 0 1px,transparent 1px 2px)"></div>
<div style="position:absolute;left:32px;top:528px;width:1px;height:84px;background:repeating-linear-gradient(180deg,#a0a0a0 0 1px,transparent 1px 2px)"></div>
<div style="position:absolute;left:37px;top:542px;width:6px;height:1px;background:repeating-linear-gradient(90deg,#a0a0a0 0 1px,transparent 1px 2px)"></div>
<div style="position:absolute;left:37px;top:564px;width:6px;height:1px;background:repeating-linear-gradient(90deg,#a0a0a0 0 1px,transparent 1px 2px)"></div>
<div style="position:absolute;left:37px;top:586px;width:6px;height:1px;background:repeating-linear-gradient(90deg,#a0a0a0 0 1px,transparent 1px 2px)"></div>
<div style="position:absolute;left:37px;top:608px;width:6px;height:1px;background:repeating-linear-gradient(90deg,#a0a0a0 0 1px,transparent 1px 2px)"></div>
<div style="position:absolute;left:50px;top:616px;width:1px;height:15px;background:repeating-linear-gradient(180deg,#a0a0a0 0 1px,transparent 1px 2px)"></div>
<div style="position:absolute;left:51px;top:630px;width:9px;height:1px;background:repeating-linear-gradient(90deg,#a0a0a0 0 1px,transparent 1px 2px)"></div>
<div style="position:absolute;left:32px;top:660px;width:1px;height:18px;background:repeating-linear-gradient(180deg,#a0a0a0 0 1px,transparent 1px 2px)"></div>
<div style="position:absolute;left:37px;top:674px;width:6px;height:1px;background:repeating-linear-gradient(90deg,#a0a0a0 0 1px,transparent 1px 2px)"></div>
<div style="position:absolute;left:32px;top:704px;width:1px;height:18px;background:repeating-linear-gradient(180deg,#a0a0a0 0 1px,transparent 1px 2px)"></div>
<div style="position:absolute;left:37px;top:718px;width:6px;height:1px;background:repeating-linear-gradient(90deg,#a0a0a0 0 1px,transparent 1px 2px)"></div>
<div style="position:absolute;left:14px;top:532px;width:1px;height:21px;background:repeating-linear-gradient(180deg,#ffffff 0 1px,transparent 1px 2px)"></div>
<div style="position:absolute;left:32px;top:532px;width:1px;height:6px;background:repeating-linear-gradient(180deg,#ffffff 0 1px,transparent 1px 2px)"></div>
<div style="position:absolute;left:32px;top:547px;width:1px;height:6px;background:repeating-linear-gradient(180deg,#ffffff 0 1px,transparent 1px 2px)"></div>
<div style="position:absolute;left:37px;top:542px;width:6px;height:1px;background:repeating-linear-gradient(90deg,#ffffff 0 1px,transparent 1px 2px)"></div>
<svg style="position:absolute;left:10px;top:384px" width="9" height="9" viewBox="0 0 9 9"><rect x="0.5" y="0.5" width="8" height="8" rx="1" fill="url(#eg)" stroke="#9a9a9a" stroke-width="1"/><path d="M2.5 4.5H6.5" stroke="#2b3f9a" stroke-width="1"/><path d="M4.5 2.5V6.5" stroke="#2b3f9a" stroke-width="1"/></svg>
<svg style="position:absolute;left:26px;top:380px" width="18" height="18" viewBox="0 0 18 18"><path d="M2 1.9L6.2 6L7.6 3.9L14.5 8.7L15.7 7L15.9 15.7L7 14.5L7.9 12.4L7.5 9.3L5.2 11.6Z" fill="url(#flg)" stroke="#f05a18" stroke-width="0.8" stroke-linejoin="round"/></svg>
<div class="t" style="left:48.79px;top:382.15px;font-size:14px;color:#000;transform:scaleX(1.0190);transform-origin:0 0;">Schnellstart Mi, 18.07.2018 09:09:56</div>
<svg style="position:absolute;left:10px;top:406px" width="9" height="9" viewBox="0 0 9 9"><rect x="0.5" y="0.5" width="8" height="8" rx="1" fill="url(#eg)" stroke="#9a9a9a" stroke-width="1"/><path d="M2.5 4.5H6.5" stroke="#2b3f9a" stroke-width="1"/><path d="M4.5 2.5V6.5" stroke="#2b3f9a" stroke-width="1"/></svg>
<svg style="position:absolute;left:30px;top:404px" width="11" height="15" viewBox="0 0 11 15"><circle cx="5.3" cy="3.6" r="3.6" fill="#1e1e1e"/><path d="M1 14Q0 9.5 3.5 8.5M9.5 14Q10.5 9.5 7 8.5" fill="none" stroke="#1e1e1e" stroke-width="1.4"/><path d="M1 13.5Q5.3 15 9.5 13.5" fill="none" stroke="#1e1e1e" stroke-width="1.2"/><rect x="4.4" y="8" width="1.8" height="6" fill="#4a9ede"/></svg>
<div class="t" style="left:49.07px;top:404.15px;font-size:14px;font-weight:bold;color:#000080;transform:scaleX(1.0921);transform-origin:0 0;">Alpha GmbH [1245]</div>
<svg style="position:absolute;left:10px;top:428px" width="9" height="9" viewBox="0 0 9 9"><rect x="0.5" y="0.5" width="8" height="8" rx="1" fill="url(#eg)" stroke="#9a9a9a" stroke-width="1"/><path d="M2.5 4.5H6.5" stroke="#2b3f9a" stroke-width="1"/></svg>
<svg style="position:absolute;left:30px;top:426px" width="11" height="15" viewBox="0 0 11 15"><circle cx="5.3" cy="3.6" r="3.6" fill="#1e1e1e"/><path d="M1 14Q0 9.5 3.5 8.5M9.5 14Q10.5 9.5 7 8.5" fill="none" stroke="#1e1e1e" stroke-width="1.4"/><path d="M1 13.5Q5.3 15 9.5 13.5" fill="none" stroke="#1e1e1e" stroke-width="1.2"/><rect x="4.4" y="8" width="1.8" height="6" fill="#4a9ede"/></svg>
<div class="t" style="left:48.44px;top:426.15px;font-size:14px;font-weight:bold;color:#000080;transform:scaleX(1.0698);transform-origin:0 0;">Beispielkunde [5662]</div>
<svg style="position:absolute;left:28px;top:450px" width="9" height="9" viewBox="0 0 9 9"><rect x="0.5" y="0.5" width="8" height="8" rx="1" fill="url(#eg)" stroke="#9a9a9a" stroke-width="1"/><path d="M2.5 4.5H6.5" stroke="#2b3f9a" stroke-width="1"/><path d="M4.5 2.5V6.5" stroke="#2b3f9a" stroke-width="1"/></svg>
<svg style="position:absolute;left:46px;top:448px" width="15" height="15" viewBox="0 0 15 15"><path d="M1.8 2.5L3.8 4.5M13.2 2.5L11.2 4.5M0 8H2.8M15 8H12.2M2 13.5L4 11.5M13 13.5L11 11.5" stroke="#111" stroke-width="1.7"/><circle cx="7.5" cy="7.8" r="5.2" fill="#e8b830" stroke="#b08010" stroke-width="0.6"/><path d="M4.5 3.5Q7.5 1 10.5 3.5Z" fill="#555"/><circle cx="7.5" cy="8" r="3.2" fill="#9ad4f0" stroke="#777" stroke-width="0.8"/><path d="M10 11L13.5 14" stroke="#f07030" stroke-width="2"/></svg>
<div class="t" style="left:66.71px;top:448.15px;font-size:14px;color:#000;transform:scaleX(1.0789);transform-origin:0 0;">Markenanmeldung</div>
<div class="t" style="left:198.70px;top:448.84px;font-size:12px;color:#8a8a8a;">(Team)</div>
<svg style="position:absolute;left:10px;top:472px" width="9" height="9" viewBox="0 0 9 9"><rect x="0.5" y="0.5" width="8" height="8" rx="1" fill="url(#eg)" stroke="#9a9a9a" stroke-width="1"/><path d="M2.5 4.5H6.5" stroke="#2b3f9a" stroke-width="1"/><path d="M4.5 2.5V6.5" stroke="#2b3f9a" stroke-width="1"/></svg>
<svg style="position:absolute;left:30px;top:470px" width="11" height="15" viewBox="0 0 11 15"><circle cx="5.3" cy="3.6" r="3.6" fill="#1e1e1e"/><path d="M1 14Q0 9.5 3.5 8.5M9.5 14Q10.5 9.5 7 8.5" fill="none" stroke="#1e1e1e" stroke-width="1.4"/><path d="M1 13.5Q5.3 15 9.5 13.5" fill="none" stroke="#1e1e1e" stroke-width="1.2"/><rect x="4.4" y="8" width="1.8" height="6" fill="#4a9ede"/></svg>
<div class="t" style="left:48.86px;top:470.15px;font-size:14px;font-weight:bold;color:#000080;transform:scaleX(1.0872);transform-origin:0 0;">Gamma GmbH [5]</div>
<svg style="position:absolute;left:10px;top:494px" width="9" height="9" viewBox="0 0 9 9"><rect x="0.5" y="0.5" width="8" height="8" rx="1" fill="url(#eg)" stroke="#9a9a9a" stroke-width="1"/><path d="M2.5 4.5H6.5" stroke="#2b3f9a" stroke-width="1"/><path d="M4.5 2.5V6.5" stroke="#2b3f9a" stroke-width="1"/></svg>
<svg style="position:absolute;left:30px;top:492px" width="11" height="15" viewBox="0 0 11 15"><circle cx="5.3" cy="3.6" r="3.6" fill="#1e1e1e"/><path d="M1 14Q0 9.5 3.5 8.5M9.5 14Q10.5 9.5 7 8.5" fill="none" stroke="#1e1e1e" stroke-width="1.4"/><path d="M1 13.5Q5.3 15 9.5 13.5" fill="none" stroke="#1e1e1e" stroke-width="1.2"/><rect x="4.4" y="8" width="1.8" height="6" fill="#4a9ede"/></svg>
<div class="t" style="left:48.97px;top:492.15px;font-size:14px;font-weight:bold;color:#000080;transform:scaleX(1.0736);transform-origin:0 0;">Sigma GmbH [15]</div>
<svg style="position:absolute;left:10px;top:516px" width="9" height="9" viewBox="0 0 9 9"><rect x="0.5" y="0.5" width="8" height="8" rx="1" fill="url(#eg)" stroke="#9a9a9a" stroke-width="1"/><path d="M2.5 4.5H6.5" stroke="#2b3f9a" stroke-width="1"/></svg>
<svg style="position:absolute;left:30px;top:514px" width="11" height="15" viewBox="0 0 11 15"><circle cx="5.3" cy="3.6" r="3.6" fill="#1e1e1e"/><path d="M1 14Q0 9.5 3.5 8.5M9.5 14Q10.5 9.5 7 8.5" fill="none" stroke="#1e1e1e" stroke-width="1.4"/><path d="M1 13.5Q5.3 15 9.5 13.5" fill="none" stroke="#1e1e1e" stroke-width="1.2"/><rect x="4.4" y="8" width="1.8" height="6" fill="#4a9ede"/></svg>
<div class="t" style="left:49.29px;top:514.15px;font-size:14px;font-weight:bold;color:#000080;transform:scaleX(1.0801);transform-origin:0 0;">Tau GmbH [9]</div>
<svg style="position:absolute;left:28px;top:538px" width="9" height="9" viewBox="0 0 9 9"><rect x="0.5" y="0.5" width="8" height="8" rx="1" fill="url(#eg)" stroke="#9a9a9a" stroke-width="1"/><path d="M2.5 4.5H6.5" stroke="#2b3f9a" stroke-width="1"/><path d="M4.5 2.5V6.5" stroke="#2b3f9a" stroke-width="1"/></svg>
<svg style="position:absolute;left:46px;top:536px" width="15" height="15" viewBox="0 0 15 15"><path d="M1.8 2.5L3.8 4.5M13.2 2.5L11.2 4.5M0 8H2.8M15 8H12.2M2 13.5L4 11.5M13 13.5L11 11.5" stroke="#111" stroke-width="1.7"/><circle cx="7.5" cy="7.8" r="5.2" fill="#e8b830" stroke="#b08010" stroke-width="0.6"/><path d="M4.5 3.5Q7.5 1 10.5 3.5Z" fill="#555"/><circle cx="7.5" cy="8" r="3.2" fill="#9ad4f0" stroke="#777" stroke-width="0.8"/><path d="M10 11L13.5 14" stroke="#f07030" stroke-width="2"/></svg>
<div class="t" style="left:66.73px;top:536.15px;font-size:14px;color:#000;transform:scaleX(1.0605);transform-origin:0 0;">Kunde Xyz » Bugfixing</div>
<div class="t" style="left:222.70px;top:536.84px;font-size:12px;color:#8a8a8a;">(Team)</div>
<svg style="position:absolute;left:28px;top:560px" width="9" height="9" viewBox="0 0 9 9"><rect x="0.5" y="0.5" width="8" height="8" rx="1" fill="url(#eg)" stroke="#9a9a9a" stroke-width="1"/><path d="M2.5 4.5H6.5" stroke="#2b3f9a" stroke-width="1"/><path d="M4.5 2.5V6.5" stroke="#2b3f9a" stroke-width="1"/></svg>
<svg style="position:absolute;left:46px;top:558px" width="15" height="15" viewBox="0 0 15 15"><path d="M1.8 2.5L3.8 4.5M13.2 2.5L11.2 4.5M0 8H2.8M15 8H12.2M2 13.5L4 11.5M13 13.5L11 11.5" stroke="#111" stroke-width="1.7"/><circle cx="7.5" cy="7.8" r="5.2" fill="#e8b830" stroke="#b08010" stroke-width="0.6"/><path d="M4.5 3.5Q7.5 1 10.5 3.5Z" fill="#555"/><circle cx="7.5" cy="8" r="3.2" fill="#9ad4f0" stroke="#777" stroke-width="0.8"/><path d="M10 11L13.5 14" stroke="#f07030" stroke-width="2"/></svg>
<div class="t" style="left:66.74px;top:558.15px;font-size:14px;color:#000;transform:scaleX(1.0546);transform-origin:0 0;">Kunde Xyz » Testunterprojekt</div>
<div class="t" style="left:267.70px;top:558.84px;font-size:12px;color:#8a8a8a;">(Team)</div>
<svg style="position:absolute;left:28px;top:582px" width="9" height="9" viewBox="0 0 9 9"><rect x="0.5" y="0.5" width="8" height="8" rx="1" fill="url(#eg)" stroke="#9a9a9a" stroke-width="1"/><path d="M2.5 4.5H6.5" stroke="#2b3f9a" stroke-width="1"/><path d="M4.5 2.5V6.5" stroke="#2b3f9a" stroke-width="1"/></svg>
<svg style="position:absolute;left:44px;top:578px" width="18" height="18" viewBox="0 0 18 18"><path d="M2 1.9L6.2 6L7.6 3.9L14.5 8.7L15.7 7L15.9 15.7L7 14.5L7.9 12.4L7.5 9.3L5.2 11.6Z" fill="url(#flg)" stroke="#f05a18" stroke-width="0.8" stroke-linejoin="round"/></svg>
<div class="t" style="left:66.74px;top:580.15px;font-size:14px;color:#000;transform:scaleX(1.0543);transform-origin:0 0;">Messeplakate</div>
<svg style="position:absolute;left:28px;top:604px" width="9" height="9" viewBox="0 0 9 9"><rect x="0.5" y="0.5" width="8" height="8" rx="1" fill="url(#eg)" stroke="#9a9a9a" stroke-width="1"/><path d="M2.5 4.5H6.5" stroke="#2b3f9a" stroke-width="1"/></svg>
<svg style="position:absolute;left:44px;top:600px" width="18" height="18" viewBox="0 0 18 18"><path d="M2 1.9L6.2 6L7.6 3.9L14.5 8.7L15.7 7L15.9 15.7L7 14.5L7.9 12.4L7.5 9.3L5.2 11.6Z" fill="url(#flg)" stroke="#f05a18" stroke-width="0.8" stroke-linejoin="round"/></svg>
<div class="t" style="left:67.57px;top:602.15px;font-size:14px;color:#000;transform:scaleX(1.0942);transform-origin:0 0;">Telefonate</div>
<div class="t" style="left:146.10px;top:602.84px;font-size:12px;color:#8a8a8a;">(Team)</div>
<svg style="position:absolute;left:65px;top:624px" width="14" height="14" viewBox="0 0 14 14"><circle cx="5" cy="3.5" r="3.5" fill="#222"/><path d="M0 13.5Q0 8 5 8Q8 8 9 9V13.5Z" fill="#222"/><circle cx="9.5" cy="10" r="3.6" fill="#fff" stroke="#222" stroke-width="1"/><rect x="9" y="8.3" width="1.2" height="3.8" fill="#3d98de"/></svg>
<div class="t" style="left:84.51px;top:624.84px;font-size:12px;font-weight:bold;color:#000;transform:scaleX(0.9872);transform-origin:0 0;">Dr. Mike Beispiel</div>
<svg style="position:absolute;left:10px;top:648px" width="9" height="9" viewBox="0 0 9 9"><rect x="0.5" y="0.5" width="8" height="8" rx="1" fill="url(#eg)" stroke="#9a9a9a" stroke-width="1"/><path d="M2.5 4.5H6.5" stroke="#2b3f9a" stroke-width="1"/></svg>
<svg style="position:absolute;left:30px;top:646px" width="11" height="15" viewBox="0 0 11 15"><circle cx="5.3" cy="3.6" r="3.6" fill="#1e1e1e"/><path d="M1 14Q0 9.5 3.5 8.5M9.5 14Q10.5 9.5 7 8.5" fill="none" stroke="#1e1e1e" stroke-width="1.4"/><path d="M1 13.5Q5.3 15 9.5 13.5" fill="none" stroke="#1e1e1e" stroke-width="1.2"/><rect x="4.4" y="8" width="1.8" height="6" fill="#4a9ede"/></svg>
<div class="t" style="left:49.29px;top:646.15px;font-size:14px;font-weight:bold;color:#000080;transform:scaleX(1.0942);transform-origin:0 0;">Theta GmbH [202]</div>
<svg style="position:absolute;left:28px;top:670px" width="9" height="9" viewBox="0 0 9 9"><rect x="0.5" y="0.5" width="8" height="8" rx="1" fill="url(#eg)" stroke="#9a9a9a" stroke-width="1"/><path d="M2.5 4.5H6.5" stroke="#2b3f9a" stroke-width="1"/><path d="M4.5 2.5V6.5" stroke="#2b3f9a" stroke-width="1"/></svg>
<svg style="position:absolute;left:46px;top:668px" width="15" height="15" viewBox="0 0 15 15"><path d="M1.8 2.5L3.8 4.5M13.2 2.5L11.2 4.5M0 8H2.8M15 8H12.2M2 13.5L4 11.5M13 13.5L11 11.5" stroke="#111" stroke-width="1.7"/><circle cx="7.5" cy="7.8" r="5.2" fill="#e8b830" stroke="#b08010" stroke-width="0.6"/><path d="M4.5 3.5Q7.5 1 10.5 3.5Z" fill="#555"/><circle cx="7.5" cy="8" r="3.2" fill="#9ad4f0" stroke="#777" stroke-width="0.8"/><path d="M10 11L13.5 14" stroke="#f07030" stroke-width="2"/></svg>
<div class="t" style="left:67.25px;top:668.15px;font-size:14px;color:#000;transform:scaleX(1.0865);transform-origin:0 0;">Quote » Bugfixing</div>
<div class="t" style="left:194.80px;top:668.84px;font-size:12px;color:#8a8a8a;">(Team)</div>
<svg style="position:absolute;left:10px;top:692px" width="9" height="9" viewBox="0 0 9 9"><rect x="0.5" y="0.5" width="8" height="8" rx="1" fill="url(#eg)" stroke="#9a9a9a" stroke-width="1"/><path d="M2.5 4.5H6.5" stroke="#2b3f9a" stroke-width="1"/></svg>
<svg style="position:absolute;left:30px;top:690px" width="11" height="15" viewBox="0 0 11 15"><circle cx="5.3" cy="3.6" r="3.6" fill="#1e1e1e"/><path d="M1 14Q0 9.5 3.5 8.5M9.5 14Q10.5 9.5 7 8.5" fill="none" stroke="#1e1e1e" stroke-width="1.4"/><path d="M1 13.5Q5.3 15 9.5 13.5" fill="none" stroke="#1e1e1e" stroke-width="1.2"/><rect x="4.4" y="8" width="1.8" height="6" fill="#4a9ede"/></svg>
<div class="t" style="left:49.29px;top:690.15px;font-size:14px;font-weight:bold;color:#000080;transform:scaleX(1.0958);transform-origin:0 0;">Xpert-Timer Software [5661]</div>
<svg style="position:absolute;left:28px;top:714px" width="9" height="9" viewBox="0 0 9 9"><rect x="0.5" y="0.5" width="8" height="8" rx="1" fill="url(#eg)" stroke="#9a9a9a" stroke-width="1"/><path d="M2.5 4.5H6.5" stroke="#2b3f9a" stroke-width="1"/><path d="M4.5 2.5V6.5" stroke="#2b3f9a" stroke-width="1"/></svg>
<svg style="position:absolute;left:44px;top:710px" width="18" height="18" viewBox="0 0 18 18"><path d="M2 1.9L6.2 6L7.6 3.9L14.5 8.7L15.7 7L15.9 15.7L7 14.5L7.9 12.4L7.5 9.3L5.2 11.6Z" fill="url(#flg)" stroke="#f05a18" stroke-width="0.8" stroke-linejoin="round"/></svg>
<div class="t" style="left:67.57px;top:712.15px;font-size:14px;color:#000;transform:scaleX(1.0994);transform-origin:0 0;">Telefonat privat</div>
<div class="t" style="left:31.28px;top:734.15px;font-size:14px;font-weight:bold;color:#808080;transform:scaleX(1.0460);transform-origin:0 0;">Gesamt:</div>
<div class="t" style="left:407.30px;top:382.15px;font-size:14px;color:#000;transform:scaleX(1.0627);transform-origin:0 0;">Aktiv</div>
<div class="t" style="left:407.30px;top:404.15px;font-size:14px;color:#000080;transform:scaleX(1.0730);transform-origin:0 0;">Aktiv(1)</div>
<div class="t" style="left:407.30px;top:426.15px;font-size:14px;color:#000080;transform:scaleX(1.0730);transform-origin:0 0;">Aktiv(1)</div>
<div class="t" style="left:407.30px;top:448.15px;font-size:14px;color:#000;transform:scaleX(1.0627);transform-origin:0 0;">Aktiv</div>
<div class="t" style="left:407.30px;top:470.15px;font-size:14px;color:#000080;transform:scaleX(1.0730);transform-origin:0 0;">Aktiv(1)</div>
<div class="t" style="left:407.30px;top:536.15px;font-size:14px;color:#000;transform:scaleX(1.0627);transform-origin:0 0;">Aktiv</div>
<div class="t" style="left:407.30px;top:558.15px;font-size:14px;color:#000;transform:scaleX(1.0627);transform-origin:0 0;">Aktiv</div>
<div class="t" style="left:407.30px;top:580.15px;font-size:14px;color:#000;transform:scaleX(1.0627);transform-origin:0 0;">Aktiv</div>
<div class="t" style="left:407.30px;top:602.15px;font-size:14px;color:#000;transform:scaleX(1.0627);transform-origin:0 0;">Aktiv</div>
<div class="t" style="left:407.30px;top:646.15px;font-size:14px;color:#000080;transform:scaleX(1.0730);transform-origin:0 0;">Aktiv(1)</div>
<div class="t" style="left:407.30px;top:668.15px;font-size:14px;color:#000;transform:scaleX(1.0627);transform-origin:0 0;">Aktiv</div>
<div class="t" style="left:407.30px;top:690.15px;font-size:14px;color:#000080;transform:scaleX(1.0730);transform-origin:0 0;">Aktiv(1)</div>
<div class="t" style="left:407.30px;top:712.15px;font-size:14px;color:#000;transform:scaleX(1.0627);transform-origin:0 0;">Aktiv</div>
<svg style="position:absolute;left:550.5px;top:385px" width="14" height="12" viewBox="0 0 14 12"><rect x="0" y="0.5" width="13" height="2.6" rx="1.2" fill="#8cb84a"/><rect x="0" y="4.5" width="13" height="2.6" rx="1.2" fill="#8cb84a"/><rect x="0" y="8.5" width="13" height="2.6" rx="1.2" fill="#8cb84a"/></svg>
<svg style="position:absolute;left:550.5px;top:451px" width="14" height="12" viewBox="0 0 14 12"><rect x="0" y="0.5" width="13" height="2.6" rx="1.2" fill="#8cb84a"/><rect x="0" y="4.5" width="13" height="2.6" rx="1.2" fill="#8cb84a"/><rect x="0" y="8.5" width="13" height="2.6" rx="1.2" fill="#8cb84a"/></svg>
<div class="t" style="left:866.44px;top:404.15px;font-size:14px;font-weight:bold;color:#000080;transform:scaleX(1.1100);transform-origin:0 0;">1,38</div>
<div class="t" style="left:866.44px;top:426.15px;font-size:14px;font-weight:bold;color:#000080;transform:scaleX(1.1100);transform-origin:0 0;">1,35</div>
<div class="t" style="left:869.33px;top:448.15px;font-size:14px;color:#000;transform:scaleX(1.0100);transform-origin:0 0;">1,35</div>
<div class="t" style="left:866.55px;top:470.15px;font-size:14px;font-weight:bold;color:#000080;transform:scaleX(1.1100);transform-origin:0 0;">2,83</div>
<div class="t" style="left:866.55px;top:514.15px;font-size:14px;font-weight:bold;color:#000080;transform:scaleX(1.1100);transform-origin:0 0;">7,02</div>
<div class="t" style="left:869.33px;top:536.15px;font-size:14px;color:#000;transform:scaleX(1.0100);transform-origin:0 0;">5,98</div>
<div class="t" style="left:869.43px;top:580.15px;font-size:14px;color:#808080;transform:scaleX(1.0100);transform-origin:0 0;">0,47</div>
<div class="t" style="left:869.43px;top:602.15px;font-size:14px;color:#000;transform:scaleX(1.0100);transform-origin:0 0;">0,57</div>
<div class="t" style="left:866.55px;top:690.15px;font-size:14px;font-weight:bold;color:#000080;transform:scaleX(1.1100);transform-origin:0 0;">1,62</div>
<div class="t" style="left:869.43px;top:712.15px;font-size:14px;color:#000;transform:scaleX(1.0100);transform-origin:0 0;">1,62</div>
<div class="t" style="left:858.00px;top:734.15px;font-size:14px;font-weight:bold;color:#808080;transform:scaleX(1.1100);transform-origin:0 0;">14,20</div>
<div class="t" style="left:875.10px;top:625.69px;font-size:11px;color:#808080;">0,57</div>
<div class="t" style="left:780.15px;top:405.15px;font-size:14px;font-family:'Liberation Serif',serif;color:#8a8a8a;transform:scaleX(1.2162);transform-origin:0 0;">Σ</div>
<div class="t" style="left:780.15px;top:427.15px;font-size:14px;font-family:'Liberation Serif',serif;color:#8a8a8a;transform:scaleX(1.2162);transform-origin:0 0;">Σ</div>
<div class="t" style="left:780.15px;top:471.15px;font-size:14px;font-family:'Liberation Serif',serif;color:#8a8a8a;transform:scaleX(1.2162);transform-origin:0 0;">Σ</div>
<div class="t" style="left:780.15px;top:515.15px;font-size:14px;font-family:'Liberation Serif',serif;color:#8a8a8a;transform:scaleX(1.2162);transform-origin:0 0;">Σ</div>
<div class="t" style="left:780.15px;top:581.15px;font-size:14px;font-family:'Liberation Serif',serif;color:#8a8a8a;transform:scaleX(1.2162);transform-origin:0 0;">Σ</div>
<div class="t" style="left:780.15px;top:691.15px;font-size:14px;font-family:'Liberation Serif',serif;color:#8a8a8a;transform:scaleX(1.2162);transform-origin:0 0;">Σ</div>
<div class="t" style="left:1043.93px;top:382.15px;font-size:14px;color:#000;transform:scaleX(1.0100);transform-origin:0 0;">0,00</div>
<div class="t" style="left:1041.14px;top:404.15px;font-size:14px;font-weight:bold;color:#000080;transform:scaleX(1.1100);transform-origin:0 0;">1,38</div>
<div class="t" style="left:1041.14px;top:426.15px;font-size:14px;font-weight:bold;color:#000080;transform:scaleX(1.1100);transform-origin:0 0;">1,35</div>
<div class="t" style="left:1044.03px;top:448.15px;font-size:14px;color:#000;transform:scaleX(1.0100);transform-origin:0 0;">1,35</div>
<div class="t" style="left:1041.25px;top:470.15px;font-size:14px;font-weight:bold;color:#000080;transform:scaleX(1.1100);transform-origin:0 0;">2,83</div>
<div class="t" style="left:1041.14px;top:492.15px;font-size:14px;font-weight:bold;color:#000080;transform:scaleX(1.1100);transform-origin:0 0;">3,95</div>
<div class="t" style="left:1041.14px;top:514.15px;font-size:14px;font-weight:bold;color:#000080;transform:scaleX(1.1100);transform-origin:0 0;">9,25</div>
<div class="t" style="left:1043.83px;top:536.15px;font-size:14px;color:#000;transform:scaleX(1.0100);transform-origin:0 0;">8,24</div>
<div class="t" style="left:1044.13px;top:580.15px;font-size:14px;color:#808080;transform:scaleX(1.0100);transform-origin:0 0;">0,47</div>
<div class="t" style="left:1044.13px;top:602.15px;font-size:14px;color:#000;transform:scaleX(1.0100);transform-origin:0 0;">0,57</div>
<div class="t" style="left:1041.25px;top:646.15px;font-size:14px;font-weight:bold;color:#000080;transform:scaleX(1.1100);transform-origin:0 0;">0,00</div>
<div class="t" style="left:1043.93px;top:668.15px;font-size:14px;color:#000;transform:scaleX(1.0100);transform-origin:0 0;">0,00</div>
<div class="t" style="left:1041.25px;top:690.15px;font-size:14px;font-weight:bold;color:#000080;transform:scaleX(1.1100);transform-origin:0 0;">1,62</div>
<div class="t" style="left:1044.13px;top:712.15px;font-size:14px;color:#000;transform:scaleX(1.0100);transform-origin:0 0;">1,62</div>
<div class="t" style="left:1032.59px;top:734.15px;font-size:14px;font-weight:bold;color:#808080;transform:scaleX(1.1100);transform-origin:0 0;">20,48</div>
<div class="t" style="left:1050.10px;top:625.69px;font-size:11px;color:#808080;">0,57</div>
<div class="t" style="left:905.15px;top:405.15px;font-size:14px;font-family:'Liberation Serif',serif;color:#8a8a8a;transform:scaleX(1.2162);transform-origin:0 0;">Σ</div>
<div class="t" style="left:905.15px;top:427.15px;font-size:14px;font-family:'Liberation Serif',serif;color:#8a8a8a;transform:scaleX(1.2162);transform-origin:0 0;">Σ</div>
<div class="t" style="left:905.15px;top:471.15px;font-size:14px;font-family:'Liberation Serif',serif;color:#8a8a8a;transform:scaleX(1.2162);transform-origin:0 0;">Σ</div>
<div class="t" style="left:905.15px;top:493.15px;font-size:14px;font-family:'Liberation Serif',serif;color:#8a8a8a;transform:scaleX(1.2162);transform-origin:0 0;">Σ</div>
<div class="t" style="left:905.15px;top:515.15px;font-size:14px;font-family:'Liberation Serif',serif;color:#8a8a8a;transform:scaleX(1.2162);transform-origin:0 0;">Σ</div>
<div class="t" style="left:905.15px;top:581.15px;font-size:14px;font-family:'Liberation Serif',serif;color:#8a8a8a;transform:scaleX(1.2162);transform-origin:0 0;">Σ</div>
<div class="t" style="left:905.15px;top:647.15px;font-size:14px;font-family:'Liberation Serif',serif;color:#8a8a8a;transform:scaleX(1.2162);transform-origin:0 0;">Σ</div>
<div class="t" style="left:905.15px;top:691.15px;font-size:14px;font-family:'Liberation Serif',serif;color:#8a8a8a;transform:scaleX(1.2162);transform-origin:0 0;">Σ</div>
<div class="t" style="left:701.75px;top:492.15px;font-size:14px;font-weight:bold;color:#000080;transform:scaleX(1.1031);transform-origin:0 0;">0%</div>
<div class="t" style="left:701.75px;top:646.15px;font-size:14px;font-weight:bold;color:#000080;transform:scaleX(1.1031);transform-origin:0 0;">0%</div>
<div class="t" style="left:702.22px;top:668.15px;font-size:14px;color:#000;transform:scaleX(1.0622);transform-origin:0 0;">0%</div>
<div style="position:absolute;left:648px;top:511px;width:127px;height:19px;background:linear-gradient(90deg,#d8eab0 0 99px,#fff 99px);border:1px solid #5a5a5a;box-sizing:border-box"></div>
<div class="t" style="left:698.20px;top:512.65px;font-size:14px;font-weight:bold;color:#000080;transform:scaleX(1.0812);transform-origin:0 0;">79%</div>
<div style="position:absolute;left:568px;top:533px;width:78px;height:20px;background:#6ab0c0;border:1px solid #3a7cb8;box-sizing:border-box"></div>
<div class="t" style="left:606.70px;top:536.15px;font-size:14px;color:#000;">0%</div>
<svg style="position:absolute;left:635px;top:541px" width="8" height="5" viewBox="0 0 8 5"><path d="M0 0H8L4 4Z" fill="#4a8ec8"/></svg>
<div style="position:absolute;left:648px;top:533px;width:127px;height:20px;background:linear-gradient(90deg,#6ab0c0 0 102px,#7eb9e8 102px);border:1px solid #3a70b0;box-sizing:border-box"></div>
<div class="t" style="left:698.48px;top:536.15px;font-size:14px;color:#000;transform:scaleX(1.0296);transform-origin:0 0;">82%</div>
<svg style="position:absolute;left:780px;top:541px" width="8" height="5" viewBox="0 0 8 5"><path d="M0 0H8L4 4Z" fill="#4a8ec8"/></svg>
<svg style="position:absolute;left:905px;top:541px" width="8" height="5" viewBox="0 0 8 5"><path d="M0 0H8L4 4Z" fill="#4a8ec8"/></svg>
<svg style="position:absolute;left:389px;top:541px" width="8" height="5" viewBox="0 0 8 5"><path d="M0 0H8L4 4Z" fill="#4a8ec8"/></svg>
<svg style="position:absolute;left:393px;top:532px" width="5" height="5" viewBox="0 0 5 5"><path d="M0 0H5V5Z" fill="#5a8ac8"/></svg>
<svg style="position:absolute;left:393px;top:664px" width="5" height="5" viewBox="0 0 5 5"><path d="M0 0H5V5Z" fill="#e8a0b0"/></svg>
<div style="position:absolute;left:0px;top:922px;width:1063px;height:1px;background:#d0d0d0"></div>
<div style="position:absolute;left:727px;top:925px;width:137px;height:1px;background:repeating-linear-gradient(90deg,#a0a0a0 0 1px,transparent 1px 3px)"></div>
<div style="position:absolute;left:0px;top:928px;width:1063px;height:1px;background:#a0a0a0"></div>
<div style="position:absolute;left:0px;top:929px;width:1063px;height:20px;background:#f7f7f7"></div>
<div style="position:absolute;left:0px;top:949px;width:1063px;height:1px;background:#d0d0d0"></div>
<div class="t" style="left:5.69px;top:932.54px;font-size:12px;font-weight:bold;color:#000;transform:scaleX(1.0259);transform-origin:0 0;">Zeitstempel</div>
<div class="t" style="left:76.00px;top:932.54px;font-size:12px;color:#000;">-</div>
<div class="t" style="left:83.80px;top:932.54px;font-size:12px;color:#000;transform:scaleX(1.0089);transform-origin:0 0;">Alle Projekte [Alle Mitarbeiter]</div>
<div class="t" style="left:247.21px;top:933.19px;font-size:11px;color:#000080;transform:scaleX(0.8421);transform-origin:0 0;">[Alles]</div>
<div class="t" style="left:276.20px;top:933.19px;font-size:11px;color:#555;transform:scaleX(0.8308);transform-origin:0 0;">(=20,48h)</div>
<div style="position:absolute;left:195.6px;top:954px;width:1px;height:14px;background:#a0a0a0"></div>
<div style="position:absolute;left:247px;top:954px;width:1px;height:14px;background:#a0a0a0"></div>
<div style="position:absolute;left:405.5px;top:954px;width:1px;height:14px;background:#a0a0a0"></div>
<div style="position:absolute;left:470.3px;top:954px;width:1px;height:14px;background:#a0a0a0"></div>
<div style="position:absolute;left:543.2px;top:954px;width:1px;height:14px;background:#a0a0a0"></div>
<div style="position:absolute;left:955.4px;top:954px;width:1px;height:14px;background:#a0a0a0"></div>
<svg style="position:absolute;left:26.5px;top:960px" width="14" height="14" viewBox="0 0 14 14"><rect x="0" y="5" width="14" height="4" fill="#8cb84a"/><rect x="5" y="0" width="4" height="14" fill="#8cb84a"/></svg>
<svg style="position:absolute;left:84px;top:961px" width="12" height="12" viewBox="0 0 12 12"><path d="M1.2 1.2L10.8 10.8M10.8 1.2L1.2 10.8" stroke="#f07060" stroke-width="2.8"/></svg>
<svg style="position:absolute;left:142px;top:959px" width="14" height="15" viewBox="0 0 14 15"><rect x="3.5" y="0.5" width="7" height="5" fill="#fff" stroke="#3d98de" stroke-width="1"/><rect x="0" y="6" width="14" height="6" rx="1.5" fill="#222"/></svg>
<svg style="position:absolute;left:217px;top:961px" width="12" height="12" viewBox="0 0 12 12"><path d="M0.5 0.5L11.5 6L0.5 11.5Z" fill="#8cb84a"/></svg>
<svg style="position:absolute;left:295.5px;top:959px" width="15" height="17" viewBox="0 0 15 17"><path d="M0.8 0.8H8.5L12 4.2V10" fill="none" stroke="#222" stroke-width="1.3"/><path d="M0.8 0.8V15H5" fill="none" stroke="#222" stroke-width="1.3"/><rect x="5.5" y="8" width="9" height="8.5" fill="#fff" stroke="#2a8a3a" stroke-width="1.2"/></svg>
<svg style="position:absolute;left:373px;top:961px" width="11" height="12" viewBox="0 0 11 12"><path d="M10 1.5V0.8H1L6 6L1 11.2H10V10.5" fill="none" stroke="#222" stroke-width="1.8"/></svg>
<svg style="position:absolute;left:423.5px;top:959px" width="16" height="16" viewBox="0 0 16 16"><path d="M8.5 7.5V0.3A7.5 7.5 0 0 1 15.7 7.5Z" fill="#3d98de"/><path d="M7.2 1.3A6.7 6.7 0 1 0 14.7 8.8H7.2Z" fill="#222"/><path d="M7.2 8.8L1.5 13" stroke="#fff" stroke-width="0.8"/></svg>
<svg style="position:absolute;left:501px;top:962px" width="15" height="15" viewBox="0 0 15 15"><path d="M1 11L3 3L8 1L10 4L7 12Z" fill="#222"/><path d="M3.5 5L8 3.5M3 8L7.5 6.5" stroke="#fff" stroke-width="0.8"/><rect x="8" y="11" width="7" height="2.6" fill="#4cbf2a"/><rect x="10.2" y="8.8" width="2.6" height="7" fill="#4cbf2a"/></svg>
<svg style="position:absolute;left:582px;top:961px" width="15" height="12" viewBox="0 0 15 12"><path d="M0.8 0.8H5.5L7 2.5H14V11.2H0.8Z" fill="#fff" stroke="#222" stroke-width="1.3"/><rect x="0.8" y="4" width="13.2" height="7.2" fill="#222"/></svg>
<svg style="position:absolute;left:678.5px;top:959px" width="16" height="16" viewBox="0 0 16 16"><path d="M0.5 0.5H15.5L9.5 7.5V15.5L6.5 13V7.5Z" fill="#222"/></svg>
<svg style="position:absolute;left:776px;top:959px" width="13" height="15" viewBox="0 0 13 15"><rect x="0.6" y="2.5" width="12" height="11.5" fill="#fff" stroke="#222" stroke-width="1.2"/><rect x="0.6" y="2" width="12" height="3" fill="#3d98de"/><path d="M2.5 0.3V3M5 0.3V3M7.5 0.3V3M10 0.3V3" stroke="#222" stroke-width="0.9"/></svg>
<svg style="position:absolute;left:884px;top:959.5px" width="10" height="13" viewBox="0 0 10 13"><rect x="0.5" y="0.5" width="9" height="12" fill="#3d98de" stroke="#222" stroke-width="1"/><rect x="2" y="1.5" width="6" height="3" fill="#fff"/></svg>
<svg style="position:absolute;left:980px;top:961px" width="15" height="12" viewBox="0 0 15 12"><rect x="0.6" y="0.6" width="13" height="11" fill="#fff" stroke="#222" stroke-width="1.2"/><rect x="0.6" y="0.6" width="13" height="3" fill="#222"/><path d="M0.6 6.5H13.6M3.8 3V12.6M7 3V12.6M10.3 3V12.6" stroke="#222" stroke-width="0.9"/></svg>
<svg style="position:absolute;left:386px;top:486px" width="145" height="66" viewBox="0 0 145 66"><defs><filter id="sh" x="-20%" y="-20%" width="140%" height="160%"><feGaussianBlur in="SourceAlpha" stdDeviation="2.5"/><feOffset dx="4" dy="4"/><feComponentTransfer><feFuncA type="linear" slope="0.95"/></feComponentTransfer><feMerge><feMergeNode/><feMergeNode in="SourceGraphic"/></feMerge></filter></defs><g filter="url(#sh)"><path d="M21.5 6.3H120.8A15 10.5 0 0 1 135.8 16.8V29.5A15 10.5 0 0 1 120.8 40H64L73.5 59L47 40H21.5A15 10.5 0 0 1 6.5 29.5V16.8A15 10.5 0 0 1 21.5 6.3Z" fill="#fff" stroke="#e54444" stroke-width="4" stroke-linejoin="miter"/></g></svg>
<div class="t" style="left:403.80px;top:500.06px;font-size:16px;font-weight:bold;color:#000;transform:scaleX(0.9961);transform-origin:0 0;">Rechter Klick</div>
<div style="position:absolute;left:468px;top:537px;width:141px;height:413px;background:#f0f0f0;border:1px solid #a8a8a8;box-sizing:border-box;box-shadow:3px 3px 4px rgba(0,0,0,0.55)"></div>
<div style="position:absolute;left:498px;top:538px;width:1px;height:411px;background:#e4e4e4"></div>
<div style="position:absolute;left:471px;top:540px;width:22px;height:22px;background:#e3e3e3"></div>
<div style="position:absolute;left:500px;top:696px;width:106px;height:1px;background:#d4d4d4"></div>
<div style="position:absolute;left:500px;top:922px;width:106px;height:1px;background:#d4d4d4"></div>
<div class="t" style="left:501.69px;top:544.84px;font-size:12px;font-weight:bold;color:#8a8070;transform:scaleX(1.0275);transform-origin:0 0;">Aktiv</div>
<div class="t" style="left:501.13px;top:566.84px;font-size:12px;color:#000;transform:scaleX(0.9698);transform-origin:0 0;">Pausiert</div>
<div class="t" style="left:502.00px;top:588.84px;font-size:12px;color:#000;transform:scaleX(1.0156);transform-origin:0 0;">Abgebrochen</div>
<div class="t" style="left:502.00px;top:610.84px;font-size:12px;color:#000;transform:scaleX(0.9764);transform-origin:0 0;">Abgeschlossen</div>
<div class="t" style="left:500.86px;top:632.84px;font-size:12px;color:#000;transform:scaleX(1.0357);transform-origin:0 0;">Inaktiv</div>
<div class="t" style="left:502.00px;top:654.84px;font-size:12px;color:#000;transform:scaleX(0.9941);transform-origin:0 0;">Abgerechnet</div>
<div class="t" style="left:501.12px;top:676.84px;font-size:12px;color:#000;transform:scaleX(0.9817);transform-origin:0 0;">Freigegeben</div>
<div class="t" style="left:501.15px;top:704.84px;font-size:12px;color:#000;transform:scaleX(0.9404);transform-origin:0 0;">Freier Status 1</div>
<div class="t" style="left:501.15px;top:726.84px;font-size:12px;color:#000;transform:scaleX(0.9404);transform-origin:0 0;">Freier Status 2</div>
<div class="t" style="left:501.15px;top:748.84px;font-size:12px;color:#000;transform:scaleX(0.9392);transform-origin:0 0;">Freier Status 3</div>
<div class="t" style="left:501.16px;top:770.84px;font-size:12px;color:#000;transform:scaleX(0.9368);transform-origin:0 0;">Freier Status 4</div>
<div class="t" style="left:501.15px;top:792.84px;font-size:12px;color:#000;transform:scaleX(0.9392);transform-origin:0 0;">Freier Status 5</div>
<div class="t" style="left:501.15px;top:814.84px;font-size:12px;color:#000;transform:scaleX(0.9392);transform-origin:0 0;">Freier Status 6</div>
<div class="t" style="left:501.15px;top:836.84px;font-size:12px;color:#000;transform:scaleX(0.9404);transform-origin:0 0;">Freier Status 7</div>
<div class="t" style="left:501.15px;top:858.84px;font-size:12px;color:#000;transform:scaleX(0.9392);transform-origin:0 0;">Freier Status 8</div>
<div class="t" style="left:501.15px;top:880.84px;font-size:12px;color:#000;transform:scaleX(0.9392);transform-origin:0 0;">Freier Status 9</div>
<div class="t" style="left:501.16px;top:902.84px;font-size:12px;color:#000;transform:scaleX(0.9358);transform-origin:0 0;">Freier Status 10</div>
<div class="t" style="left:502.00px;top:930.84px;font-size:12px;color:#000;transform:scaleX(1.0100);transform-origin:0 0;">Archiviert</div>
<svg style="position:absolute;left:477px;top:544px" width="12" height="13" viewBox="0 0 12 13"><path d="M0.5 0.5L11.5 6.5L0.5 12.5Z" fill="#9a9a9a"/></svg>
<svg style="position:absolute;left:476px;top:567px" width="11" height="12" viewBox="0 0 11 12"><rect x="0" y="0" width="3.8" height="12" fill="#1e1e1e"/><rect x="7" y="0" width="3.8" height="12" fill="#1e1e1e"/></svg>
<svg style="position:absolute;left:475px;top:588px" width="14" height="14" viewBox="0 0 14 14"><circle cx="7" cy="7" r="7" fill="#1e1e1e"/><path d="M4.3 4.3L9.7 9.7M9.7 4.3L4.3 9.7" stroke="#fff" stroke-width="1.9"/></svg>
<svg style="position:absolute;left:475px;top:610px" width="14" height="14" viewBox="0 0 14 14"><circle cx="7" cy="7" r="7" fill="#1e1e1e"/><path d="M3.8 7.2L6.2 9.6L10.4 4.8" fill="none" stroke="#fff" stroke-width="1.9"/></svg>
<svg style="position:absolute;left:474px;top:631px" width="16" height="16" viewBox="0 0 16 16"><path d="M8 1.5C12.5 1.5 15.2 3.8 15.2 6.8C15.2 9.8 12.5 12 8.5 12L6 15L6.3 11.8C3 11.2 0.8 9.3 0.8 6.8C0.8 3.8 3.5 1.5 8 1.5Z" fill="#fff" stroke="#222" stroke-width="1.1"/><text x="2.8" y="8.2" font-size="5.5" font-family="Liberation Sans" font-weight="bold" fill="#222">z</text><text x="6.5" y="9.8" font-size="5.5" font-family="Liberation Sans" font-weight="bold" fill="#222">z</text><text x="10" y="11" font-size="5" font-family="Liberation Sans" font-weight="bold" fill="#222">z</text></svg>
<svg style="position:absolute;left:474.5px;top:653px" width="16" height="15" viewBox="0 0 16 15"><path d="M0.5 0.5H3L6 3.5Q9 4 11 7L13 9H0.5Z" fill="#1e1e1e"/><rect x="0.5" y="9" width="12" height="3" fill="#3d98de"/><path d="M5 11L8 14L15 7.5" fill="none" stroke="#3cb043" stroke-width="2.2"/></svg>
<svg style="position:absolute;left:475px;top:674px" width="14" height="15" viewBox="0 0 14 15"><path d="M1 3.5L5 7L12 0.5" fill="none" stroke="#3d98de" stroke-width="2.6"/><path d="M1 9L5 12.5L12 6" fill="none" stroke="#1e1e1e" stroke-width="2.6"/></svg>
<svg style="position:absolute;left:474px;top:705.5px" width="17" height="12" viewBox="0 0 17 12"><path d="M2.5 1H14Q15.3 1 15.2 2.3Q16.3 3.6 15.2 4.9Q16.3 6.2 15.2 7.5Q16.3 8.8 15.2 10Q15.3 11 14 11H2.5Q1.2 11 1.3 10Q0.2 8.8 1.3 7.5Q0.2 6.2 1.3 4.9Q0.2 3.6 1.3 2.3Q1.2 1 2.5 1Z" fill="#ffffff" stroke="#222" stroke-width="1.25"/><path d="M4.8 3.5H12M4.8 8.5H12" stroke="#3d98de" stroke-width="1.1" stroke-linecap="round"/></svg>
<svg style="position:absolute;left:474px;top:727.5px" width="17" height="12" viewBox="0 0 17 12"><path d="M2.5 1H14Q15.3 1 15.2 2.3Q16.3 3.6 15.2 4.9Q16.3 6.2 15.2 7.5Q16.3 8.8 15.2 10Q15.3 11 14 11H2.5Q1.2 11 1.3 10Q0.2 8.8 1.3 7.5Q0.2 6.2 1.3 4.9Q0.2 3.6 1.3 2.3Q1.2 1 2.5 1Z" fill="#7ab8e8" stroke="#222" stroke-width="1.25"/><path d="M4.8 3.5H12M4.8 8.5H12" stroke="#3d98de" stroke-width="1.1" stroke-linecap="round"/></svg>
<svg style="position:absolute;left:474px;top:749.5px" width="17" height="12" viewBox="0 0 17 12"><path d="M2.5 1H14Q15.3 1 15.2 2.3Q16.3 3.6 15.2 4.9Q16.3 6.2 15.2 7.5Q16.3 8.8 15.2 10Q15.3 11 14 11H2.5Q1.2 11 1.3 10Q0.2 8.8 1.3 7.5Q0.2 6.2 1.3 4.9Q0.2 3.6 1.3 2.3Q1.2 1 2.5 1Z" fill="#5cc060" stroke="#222" stroke-width="1.25"/><path d="M4.8 3.5H12M4.8 8.5H12" stroke="#3d98de" stroke-width="1.1" stroke-linecap="round"/></svg>
<svg style="position:absolute;left:474px;top:771.5px" width="17" height="12" viewBox="0 0 17 12"><path d="M2.5 1H14Q15.3 1 15.2 2.3Q16.3 3.6 15.2 4.9Q16.3 6.2 15.2 7.5Q16.3 8.8 15.2 10Q15.3 11 14 11H2.5Q1.2 11 1.3 10Q0.2 8.8 1.3 7.5Q0.2 6.2 1.3 4.9Q0.2 3.6 1.3 2.3Q1.2 1 2.5 1Z" fill="#f0901a" stroke="#222" stroke-width="1.25"/><path d="M4.8 3.5H12M4.8 8.5H12" stroke="#3d98de" stroke-width="1.1" stroke-linecap="round"/></svg>
<svg style="position:absolute;left:474px;top:793.5px" width="17" height="12" viewBox="0 0 17 12"><path d="M2.5 1H14Q15.3 1 15.2 2.3Q16.3 3.6 15.2 4.9Q16.3 6.2 15.2 7.5Q16.3 8.8 15.2 10Q15.3 11 14 11H2.5Q1.2 11 1.3 10Q0.2 8.8 1.3 7.5Q0.2 6.2 1.3 4.9Q0.2 3.6 1.3 2.3Q1.2 1 2.5 1Z" fill="#ffff10" stroke="#222" stroke-width="1.25"/><path d="M4.8 3.5H12M4.8 8.5H12" stroke="#3d98de" stroke-width="1.1" stroke-linecap="round"/></svg>
<svg style="position:absolute;left:474px;top:815.5px" width="17" height="12" viewBox="0 0 17 12"><path d="M2.5 1H14Q15.3 1 15.2 2.3Q16.3 3.6 15.2 4.9Q16.3 6.2 15.2 7.5Q16.3 8.8 15.2 10Q15.3 11 14 11H2.5Q1.2 11 1.3 10Q0.2 8.8 1.3 7.5Q0.2 6.2 1.3 4.9Q0.2 3.6 1.3 2.3Q1.2 1 2.5 1Z" fill="#8a8a8a" stroke="#222" stroke-width="1.25"/><path d="M4.8 3.5H12M4.8 8.5H12" stroke="#3d98de" stroke-width="1.1" stroke-linecap="round"/></svg>
<svg style="position:absolute;left:474px;top:837.5px" width="17" height="12" viewBox="0 0 17 12"><path d="M2.5 1H14Q15.3 1 15.2 2.3Q16.3 3.6 15.2 4.9Q16.3 6.2 15.2 7.5Q16.3 8.8 15.2 10Q15.3 11 14 11H2.5Q1.2 11 1.3 10Q0.2 8.8 1.3 7.5Q0.2 6.2 1.3 4.9Q0.2 3.6 1.3 2.3Q1.2 1 2.5 1Z" fill="#0010ff" stroke="#222" stroke-width="1.25"/><path d="M4.8 3.5H12M4.8 8.5H12" stroke="#3d98de" stroke-width="1.1" stroke-linecap="round"/></svg>
<svg style="position:absolute;left:474px;top:859.5px" width="17" height="12" viewBox="0 0 17 12"><path d="M2.5 1H14Q15.3 1 15.2 2.3Q16.3 3.6 15.2 4.9Q16.3 6.2 15.2 7.5Q16.3 8.8 15.2 10Q15.3 11 14 11H2.5Q1.2 11 1.3 10Q0.2 8.8 1.3 7.5Q0.2 6.2 1.3 4.9Q0.2 3.6 1.3 2.3Q1.2 1 2.5 1Z" fill="#20e020" stroke="#222" stroke-width="1.25"/><path d="M4.8 3.5H12M4.8 8.5H12" stroke="#3d98de" stroke-width="1.1" stroke-linecap="round"/></svg>
<svg style="position:absolute;left:474px;top:881.5px" width="17" height="12" viewBox="0 0 17 12"><path d="M2.5 1H14Q15.3 1 15.2 2.3Q16.3 3.6 15.2 4.9Q16.3 6.2 15.2 7.5Q16.3 8.8 15.2 10Q15.3 11 14 11H2.5Q1.2 11 1.3 10Q0.2 8.8 1.3 7.5Q0.2 6.2 1.3 4.9Q0.2 3.6 1.3 2.3Q1.2 1 2.5 1Z" fill="#f0c020" stroke="#222" stroke-width="1.25"/><path d="M4.8 3.5H12M4.8 8.5H12" stroke="#3d98de" stroke-width="1.1" stroke-linecap="round"/></svg>
<svg style="position:absolute;left:474px;top:903.5px" width="17" height="12" viewBox="0 0 17 12"><path d="M2.5 1H14Q15.3 1 15.2 2.3Q16.3 3.6 15.2 4.9Q16.3 6.2 15.2 7.5Q16.3 8.8 15.2 10Q15.3 11 14 11H2.5Q1.2 11 1.3 10Q0.2 8.8 1.3 7.5Q0.2 6.2 1.3 4.9Q0.2 3.6 1.3 2.3Q1.2 1 2.5 1Z" fill="#c070f0" stroke="#222" stroke-width="1.25"/><path d="M4.8 3.5H12M4.8 8.5H12" stroke="#3d98de" stroke-width="1.1" stroke-linecap="round"/></svg>
<svg style="position:absolute;left:477px;top:929.5px" width="10" height="14" viewBox="0 0 10 14"><rect x="0.5" y="0.5" width="9" height="12" rx="1" fill="#3d98de" stroke="#222" stroke-width="1"/><rect x="2" y="2" width="6" height="4" fill="#9ad0f8"/><rect x="2" y="7" width="6" height="4" fill="#9ad0f8"/><rect x="0.5" y="12" width="9" height="1.6" fill="#222"/></svg>
<svg style="position:absolute;left:456px;top:542px" width="13" height="19" viewBox="0 0 13 19"><path d="M1 1V15.5L4.3 12.3L7 18L9.2 17L6.6 11.3H11.2Z" fill="#fff" stroke="#111" stroke-width="1.1" stroke-linejoin="round"/></svg></body></html>
